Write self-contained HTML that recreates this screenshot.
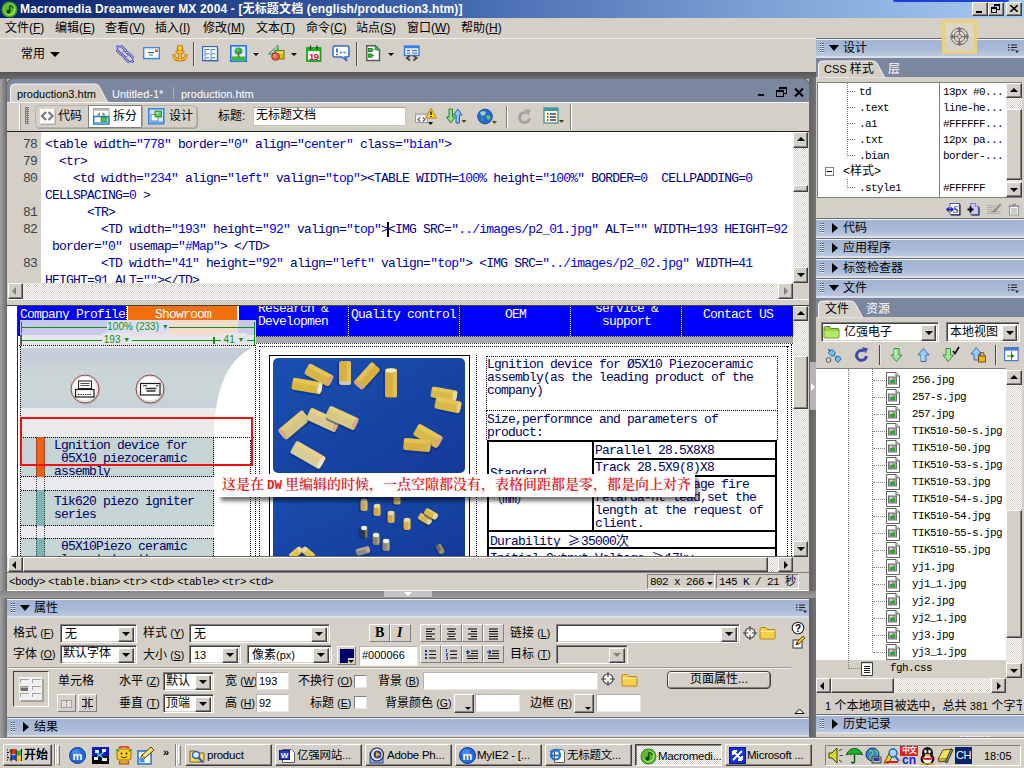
<!DOCTYPE html>
<html><head><meta charset="utf-8"><title>Macromedia Dreamweaver MX 2004</title>
<style>
*{box-sizing:border-box;margin:0;padding:0}
html,body{width:1024px;height:768px;overflow:hidden;background:#d4d0c8}
body{position:relative;font-family:"Liberation Sans","Noto Sans CJK SC",sans-serif;font-size:12px;color:#000}
.a{position:absolute}
.ui{font-family:"Liberation Sans","Noto Sans CJK SC",sans-serif;font-size:12px;line-height:14px;white-space:nowrap}
.mono{font-family:"Liberation Mono","Noto Sans CJK SC",monospace;white-space:pre}
.hdr{position:absolute;height:20px;border-top:1px solid #6e6e6e;background:linear-gradient(#eef1f7 0,#eef1f7 1px,#a3b4d4 1px,#a8b8d6 10px,#bcc8df 17px,#d9dee8 17px,#d9dee8 19px);font-size:12px;line-height:17px;white-space:nowrap}
.hdr .grip{position:absolute;left:4px;top:4px;width:5px;height:10px;background:repeating-linear-gradient(90deg,transparent 0 1px,#a8b8d6 1px 2px,transparent 2px 3px),repeating-linear-gradient(#4a5a80 0 1px,#eef1f7 1px 2px)}
.hdr .tri{position:absolute;left:13px;top:6px;width:0;height:0;border-left:5px solid transparent;border-right:5px solid transparent;border-top:6px solid #000}
.hdr .trir{position:absolute;left:16px;top:4px;width:0;height:0;border-top:5px solid transparent;border-bottom:5px solid transparent;border-left:6px solid #000}
.hdr .t{position:absolute;left:27px;top:1px}
.sunk{position:absolute;background:#fff;border:1px solid;border-color:#808080 #fff #fff #808080;box-shadow:inset 1px 1px 0 #404040,inset -1px -1px 0 #d4d0c8}
.btn{position:absolute;background:#d4d0c8;border:1px solid;border-color:#fff #404040 #404040 #fff;box-shadow:inset -1px -1px 0 #808080,inset 1px 1px 0 #d4d0c8}
.sb{position:absolute;background:#e9e7e3;background-image:repeating-conic-gradient(#fff 0 25%,#d4d0c8 0 50%);background-size:2px 2px}
.ln{font-size:13px;letter-spacing:-.8px;line-height:17px;color:#404040}
.cd{font-size:13px;letter-spacing:-.8px;line-height:17px;color:#000090}
.cd b{font-weight:normal;color:#0000f0}
.dv{font-size:13px;letter-spacing:-.8px;line-height:15px}
.sm{font-size:11px;letter-spacing:-.6px;line-height:14px}
.arr{position:absolute;width:0;height:0}
</style></head><body>
<div class="a" style="left:0;top:0;width:1024px;height:18px;background:linear-gradient(90deg,#0a246a 0,#3a5fa8 40%,#7fa2d6 75%,#a6caf0 100%)"></div>
<div class="a" style="left:893px;top:0;width:116px;height:2px;background:#1c3fd8;border-radius:0 0 3px 3px"></div>
<svg class="a" style="left:1px;top:1px" width="17" height="17" viewBox="0 0 17 17"><circle cx="8.5" cy="8.5" r="8" fill="#3c9a2c"/><circle cx="8.5" cy="8.5" r="6.3" fill="#9be04a"/><circle cx="8" cy="8" r="5" fill="#58b830"/><path d="M9.5 4.5v6.2a2 2 0 1 1-1.3-1.9V4.5z" fill="#0a3c10"/><path d="M9.5 4.5c1.5.3 2.5 1.2 2.8 2.6" stroke="#0a3c10" stroke-width="1.2" fill="none"/></svg>
<div class="a ui" id="ttl" style="left:20px;top:2px;color:#fff;font-weight:bold;font-size:12px;line-height:14px;letter-spacing:.15px">Macromedia Dreamweaver MX 2004 - [无标题文档 (english/production3.htm)]</div>
<div class="btn" style="left:972px;top:2px;width:16px;height:14px"><div class="a" style="left:3px;top:8px;width:6px;height:2px;background:#000"></div></div>
<div class="btn" style="left:988px;top:2px;width:16px;height:14px"><div class="a" style="left:5px;top:1px;width:6px;height:6px;border:1px solid #000;border-top-width:2px"></div><div class="a" style="left:2px;top:4px;width:6px;height:6px;border:1px solid #000;border-top-width:2px;background:#d4d0c8"></div></div>
<div class="btn" style="left:1006px;top:2px;width:16px;height:14px"><svg class="a" style="left:3px;top:2px" width="8" height="7" viewBox="0 0 8 7"><path d="M0 0l8 7M8 0L0 7" stroke="#000" stroke-width="1.6"/></svg></div>

<div class="a" style="left:0;top:18px;width:1024px;height:20px;background:#d4d0c8"></div>
<div class="a ui" style="left:5px;top:21px">文件(<u>F</u>)</div>
<div class="a ui" style="left:55px;top:21px">编辑(<u>E</u>)</div>
<div class="a ui" style="left:105px;top:21px">查看(<u>V</u>)</div>
<div class="a ui" style="left:155px;top:21px">插入(<u>I</u>)</div>
<div class="a ui" style="left:203px;top:21px">修改(<u>M</u>)</div>
<div class="a ui" style="left:256px;top:21px">文本(<u>T</u>)</div>
<div class="a ui" style="left:306px;top:21px">命令(<u>C</u>)</div>
<div class="a ui" style="left:356px;top:21px">站点(<u>S</u>)</div>
<div class="a ui" style="left:407px;top:21px">窗口(<u>W</u>)</div>
<div class="a ui" style="left:461px;top:21px">帮助(<u>H</u>)</div>

<div class="a" style="left:0;top:38px;width:816px;height:34px;background:#d4d0c8;border-top:1px solid #efede8"></div>
<div class="a ui" style="left:21px;top:47px">常用</div>
<div class="arr" style="left:50px;top:52px;border-left:5px solid transparent;border-right:5px solid transparent;border-top:5px solid #000"></div>
<!-- hyperlink -->
<svg class="a" style="left:116px;top:45px" width="18" height="18" viewBox="0 0 18 18"><g transform="rotate(45 9 9)"><rect x="-1.500" y="6" width="11" height="6" rx="3" fill="none" stroke="#3838b0" stroke-width="2.600"/><rect x="-1.500" y="6" width="11" height="6" rx="3" fill="none" stroke="#c0c4f8" stroke-width="1"/><rect x="8.500" y="6" width="11" height="6" rx="3" fill="none" stroke="#3838b0" stroke-width="2.600"/><rect x="8.500" y="6" width="11" height="6" rx="3" fill="none" stroke="#c0c4f8" stroke-width="1"/><rect x="6" y="7.800" width="6" height="2.400" fill="#e8e8f8" stroke="#3838b0" stroke-width=".7"/></g></svg>
<!-- email -->
<svg class="a" style="left:143px;top:47px" width="18" height="14" viewBox="0 0 18 14"><rect x="1" y="1.500" width="16" height="11.500" fill="#9ab8e0" opacity=".6"/><rect x=".7" y=".7" width="15.600" height="10.800" fill="#fff" stroke="#3a8ae8" stroke-width="1.400"/><path d="M1.500 2h14" stroke="#c8dcf8"/><rect x="5" y="5" width="6" height="1.200" fill="#555"/><rect x="6" y="7.500" width="4" height="1.200" fill="#888"/><rect x="12" y="2.500" width="3" height="2.500" fill="#f06020"/></svg>
<!-- anchor -->
<svg class="a" style="left:172px;top:45px" width="16" height="17" viewBox="0 0 16 17"><g fill="none" stroke="#b86800" stroke-width="3.200" stroke-linecap="round" stroke-linejoin="round"><circle cx="8" cy="3" r="1.600"/><path d="M8 5v9.500M5 7h6M2 10.500c.3 3 2.500 4.300 6 4.300s5.700-1.300 6-4.300"/></g><g fill="none" stroke="#ffc428" stroke-width="1.700" stroke-linecap="round" stroke-linejoin="round"><circle cx="8" cy="3" r="1.600"/><path d="M8 5v9.500M5 7h6M2 10.500c.3 3 2.500 4.300 6 4.300s5.700-1.300 6-4.300"/></g><circle cx="8" cy="3" r=".8" fill="#fff"/></svg>
<div class="a" style="left:193px;top:42px;width:2px;height:24px;border-left:1px solid #505050;border-right:1px solid #e8e6e0"></div>
<!-- table -->
<svg class="a" style="left:202px;top:46px" width="18" height="17" viewBox="0 0 18 17"><rect x="2" y="2" width="15" height="14" fill="#8898b8" opacity=".6"/><rect x=".6" y=".6" width="14.800" height="14" fill="#fff" stroke="#3a68b8" stroke-width="1.200"/><g fill="none" stroke="#4878c8" stroke-width="1"><path d="M3 7V3.500h4.500M9 7V3.500h4.500M3 10.800V7.800h4.500M9 10.800V7.800h4.500M3 14V11.800h4.500M9 14V11.800h4.500"/></g></svg>
<!-- image -->
<svg class="a" style="left:230px;top:45px" width="17" height="17" viewBox="0 0 17 17"><rect x=".8" y=".8" width="15.400" height="15.400" fill="#d8ecfc" stroke="#2a70e8" stroke-width="1.600"/><rect x="1.600" y="11.500" width="13.800" height="4" fill="#38b838"/><ellipse cx="8.500" cy="6" rx="4" ry="3.500" fill="#38a040"/><ellipse cx="7.500" cy="5" rx="2" ry="1.500" fill="#68c068"/><rect x="7.800" y="8.500" width="1.500" height="3.500" fill="#705030"/></svg>
<div class="arr" style="left:253px;top:53px;border-left:3px solid transparent;border-right:3px solid transparent;border-top:3px solid #000"></div>
<!-- media -->
<svg class="a" style="left:267px;top:44px" width="19" height="18" viewBox="0 0 19 18"><path d="M1.500 10L11 1.500V10z" fill="#78c8b8" stroke="#2a8070"/><path d="M3.500 9.500L10.500 3" stroke="#c8f0e8"/><rect x="8" y="6.500" width="9" height="8.500" fill="#c8c428" stroke="#787400"/><rect x="9" y="7.500" width="7" height="2" fill="#e8e468"/><circle cx="8.500" cy="12.500" r="3.800" fill="#f06838" stroke="#a02810"/><circle cx="7.500" cy="11.500" r="1.500" fill="#f8a080"/></svg>
<div class="arr" style="left:291px;top:53px;border-left:3px solid transparent;border-right:3px solid transparent;border-top:3px solid #000"></div>
<!-- date -->
<svg class="a" style="left:306px;top:45px" width="16" height="17" viewBox="0 0 16 17"><rect x="1" y="3" width="13.500" height="13" fill="#fff" stroke="#18a018" stroke-width="1.800"/><rect x="1" y="3" width="13.500" height="3.200" fill="#28b028"/><path d="M4.500 .5v4M11 .5v4" stroke="#103010" stroke-width="1.200"/><text x="7.800" y="14.600" font-size="9.500" font-weight="bold" font-family="Liberation Sans, sans-serif" fill="#d81030" text-anchor="middle" letter-spacing="-.5">19</text></svg>
<!-- comment -->
<svg class="a" style="left:332px;top:45px" width="18" height="17" viewBox="0 0 18 17"><path d="M3 1h12a2 2 0 0 1 2 2v7a2 2 0 0 1-2 2h-2l2 4-5-4H3a2 2 0 0 1-2-2V3a2 2 0 0 1 2-2z" fill="#fff" stroke="#3a6ac8" stroke-width="1.500"/><path d="M5 3.500v4M5 9v1.200" stroke="#3a6ac8" stroke-width="1.800"/><path d="M8 7.500h2M11.500 7.500h2" stroke="#3a6ac8" stroke-width="1.500"/></svg>
<div class="a" style="left:356px;top:42px;width:2px;height:24px;border-left:1px solid #505050;border-right:1px solid #e8e6e0"></div>
<!-- template -->
<svg class="a" style="left:366px;top:45px" width="15" height="17" viewBox="0 0 15 17"><path d="M.8.800h8.500l4.200 4.200v10.500H.8z" fill="#fff" stroke="#585858" stroke-width="1.400"/><path d="M9.300.8l4.200 4.200H9.300z" fill="#40c040" stroke="#208020" stroke-width=".8"/><rect x="2.500" y="3.500" width="3.500" height="3.200" fill="#38c038" stroke="#107010" stroke-width=".8"/><rect x="2.500" y="9" width="3.500" height="3.200" fill="#38c038" stroke="#107010" stroke-width=".8"/><path d="M6 5h2M6 10.500h2" stroke="#107010" stroke-width=".8"/></svg>
<div class="arr" style="left:388px;top:53px;border-left:3px solid transparent;border-right:3px solid transparent;border-top:3px solid #000"></div>
<!-- tag chooser -->
<svg class="a" style="left:403px;top:45px" width="18" height="17" viewBox="0 0 18 17"><rect x="1.500" y="1" width="14.500" height="9.500" fill="#e0ecfc" stroke="#3a80e8" stroke-width="1.400"/><rect x="1.500" y="1" width="14.500" height="2.200" fill="#3a80e8"/><path d="M4 5.500h3M9 5.500h5M4 8h3M9 8h5" stroke="#506890" stroke-width="1.100"/><path d="M7 10.500l-3 2.500 3 2.500M10.500 10.500l3 2.500-3 2.500" fill="none" stroke="#484848" stroke-width="2"/></svg>

<!-- dark strip + left strip -->
<div class="a" style="left:0;top:72px;width:816px;height:7px;background:linear-gradient(#565656,#6c6c6c)"></div>
<div class="a" style="left:0;top:79px;width:7px;height:660px;background:linear-gradient(90deg,#a2a2a2,#8a8a8a 45%,#6a6a6a)"></div>
<div class="a" style="left:809px;top:79px;width:7px;height:660px;background:linear-gradient(90deg,#606060,#747474)"></div>
<div class="a" style="left:0;top:591px;width:816px;height:7px;background:linear-gradient(#868686,#9a9a9a)"></div>
<div class="a" style="left:809px;top:362px;width:7px;height:48px;background:#b4b4b4"></div><div class="arr" style="left:811px;top:383px;border-top:4px solid transparent;border-bottom:4px solid transparent;border-left:4px solid #fff"></div>
<!-- document window -->
<div class="a" style="left:6px;top:78px;width:804px;height:513px;background:#6c6c6c;border-radius:8px 8px 0 0"></div>
<div class="a" style="left:7px;top:79px;width:802px;height:24px;background:#7b879f;border-radius:7px 7px 0 0"></div>
<!-- active tab -->
<svg class="a" style="left:10px;top:83px" width="100" height="20" viewBox="0 0 100 20"><path d="M.5 20V5a4 4 0 0 1 4-4h80c3 0 4 1 5.500 4l8 15z" fill="#d4d0c8" stroke="#f4f4f4" stroke-width="1"/></svg>
<div class="a ui" style="left:17px;top:87px;font-size:11px">production3.htm</div>
<div class="a ui" style="left:112px;top:87px;font-size:11px;color:#fff">Untitled-1*</div>
<div class="a" style="left:173px;top:87px;width:1px;height:12px;background:#a8b2c6"></div>
<div class="a ui" style="left:181px;top:87px;font-size:11px;color:#fff">production.htm</div>
<div class="a" style="left:758px;top:94px;width:6px;height:2px;background:#000"></div>
<div class="a" style="left:779px;top:87px;width:8px;height:7px;border:1px solid #000;border-top-width:2px"></div>
<div class="a" style="left:776px;top:90px;width:8px;height:7px;border:1px solid #000;border-top-width:2px;background:#7b879f"></div>
<svg class="a" style="left:794px;top:88px" width="10" height="9" viewBox="0 0 10 9"><path d="M1 .5l8 8M9 .5l-8 8" stroke="#000" stroke-width="2"/></svg>
<!-- doc toolbar -->
<div class="a" style="left:7px;top:102px;width:802px;height:30px;background:#d4d0c8;border-top:1px solid #f4f4f4;border-bottom:1px solid #202020"></div>
<div class="a" style="left:19px;top:104px;width:2px;height:26px;border-left:1px solid #fff;border-right:1px solid #a0a0a0"></div>
<div class="a" style="left:25px;top:107px;width:4px;height:17px;background:repeating-linear-gradient(#808080 0 1px,transparent 1px 2px),repeating-linear-gradient(90deg,#808080 0 1px,#d4d0c8 1px 2px)"></div>
<div class="a" style="left:35px;top:105px;width:162px;height:23px;border:1px solid #b8b4ac;border-radius:4px;background:#d4d0c8;box-shadow:1px 1px 0 #a8a49c"></div>
<div class="a" style="left:88px;top:105px;width:54px;height:23px;background:#fff;border:1px solid #808080"></div>
<div class="a" style="left:142px;top:107px;width:1px;height:19px;background:#a8a49c"></div>
<!-- code icon -->
<svg class="a" style="left:39px;top:108px" width="17" height="17" viewBox="0 0 17 17"><rect x="1.500" y="1.500" width="15" height="15" fill="#888"/><rect x=".5" y=".5" width="15" height="15" fill="#fafafa" stroke="#d8d8d8"/><path d="M7 4L3 8l4 4M9.500 4l4 4-4 4" fill="none" stroke="#787878" stroke-width="2.200"/></svg>
<div class="a ui" style="left:58px;top:109px">代码</div>
<svg class="a" style="left:93px;top:108px" width="17" height="17" viewBox="0 0 17 17"><rect x=".5" y=".5" width="15.500" height="15.500" fill="#fff" stroke="#a0a0a0"/><rect x="1" y="1" width="14.500" height="2" fill="#c0c0c0"/><path d="M7 4L3.500 7.500H7zM9.500 4L13 7.500H9.500z" fill="#808080"/><rect x=".8" y="8.500" width="15" height="7.500" fill="#fff" stroke="#2878d8" stroke-width="1.400"/><rect x="1.500" y="14" width="13.500" height="1.800" fill="#68a8e8"/><rect x="8" y="9.500" width="6" height="4" fill="#50c050" stroke="#208020" stroke-width=".7"/></svg>
<div class="a ui" style="left:113px;top:109px">拆分</div>
<svg class="a" style="left:148px;top:108px" width="17" height="17" viewBox="0 0 17 17"><rect x=".8" y=".8" width="15" height="15" fill="#d8e8fc" stroke="#2878d8" stroke-width="1.400"/><rect x="1.500" y="13.500" width="13.500" height="2" fill="#68a8e8"/><rect x="3" y="6.500" width="7" height="6.500" fill="#fff" stroke="#4888d8"/><rect x="7" y="3" width="6.500" height="6" fill="#58c858" stroke="#208020" stroke-width=".8"/><rect x="8" y="4" width="3" height="2" fill="#a0e8a0"/></svg>
<div class="a ui" style="left:169px;top:109px">设计</div>
<div class="a ui" style="left:218px;top:109px">标题:</div>
<div class="a" style="left:253px;top:107px;width:153px;height:19px;background:#fff;border:1px solid #c8c4bc;border-top-color:#a8a49c"></div>
<div class="a ui" style="left:256px;top:108px">无标题文档</div>
<!-- doc toolbar icons -->
<svg class="a" style="left:414px;top:107px" width="24" height="20" viewBox="0 0 24 20"><rect x="1.500" y="6.500" width="12" height="9" fill="#f4f4f4" stroke="#9a9a9a"/><rect x="1.500" y="6.500" width="12" height="2" fill="#c0c0c0"/><path d="M6 10.500L4 12.500l2 2M9 10.500l2 2-2 2" fill="none" stroke="#606060" stroke-width="1.200"/><path d="M17 1.500l5.500 9.500h-11z" fill="#ffd020" stroke="#a87800" stroke-width=".8"/><path d="M17 4.500v3.500M17 9v1" stroke="#000" stroke-width="1.300"/><path d="M14 15h5l-2.500 3z" fill="#000"/></svg>
<svg class="a" style="left:446px;top:108px" width="24" height="18" viewBox="0 0 24 18"><path d="M3 1h3.500v8H9L4.800 15 .5 9H3z" fill="#90e090" stroke="#207020" stroke-width=".9"/><path d="M13.500 15H10V7H7.500l4.300-6L16 7h-2.500z" fill="#90c4f0" stroke="#2050a0" stroke-width=".9"/><path d="M15.500 12h5l-2.500 3z" fill="#505000"/></svg>
<svg class="a" style="left:476px;top:108px" width="24" height="20" viewBox="0 0 24 20"><circle cx="9" cy="8.500" r="7.300" fill="#2868d0" stroke="#1a4898"/><path d="M4.500 4.500c2-1.500 4-1 4.500.5s-1 2.500-2.500 3.500 0 3.500 1 4.500M11 7c2 0 3.500 1 3.500 2.500s-2 3-3 2-1.500-3-.5-4.500z" fill="#58c858"/><ellipse cx="7" cy="5" rx="3" ry="2" fill="#c8e0ff" opacity=".6"/><path d="M16 13h5l-2.500 3z" fill="#505000"/></svg>
<div class="a" style="left:506px;top:106px;width:2px;height:22px;border-left:1px solid #808080;border-right:1px solid #fff"></div>
<svg class="a" style="left:517px;top:109px" width="16" height="16" viewBox="0 0 16 16"><path d="M12.500 9a5 5 0 1 1-3-5" fill="none" stroke="#a4a4a4" stroke-width="3"/><path d="M7.500 0l6.500 1-2.500 6z" fill="#a4a4a4"/></svg>
<svg class="a" style="left:543px;top:107px" width="24" height="20" viewBox="0 0 24 20"><rect x="1" y="1" width="14" height="15" fill="#fffad0" stroke="#3a8a98" stroke-width="1.200"/><rect x="1" y="1" width="14" height="3" fill="#3a9aa8"/><path d="M4 7h1.500M7 7h6M4 10h1.500M7 10h6M4 13h1.500M7 13h6" stroke="#304080" stroke-width="1.400"/><path d="M16 13h5l-2.500 3z" fill="#404000"/></svg>
<div class="a" style="left:570px;top:104px;width:2px;height:26px;border-left:1px solid #808080;border-right:1px solid #fff"></div>

<div class="a" style="left:7px;top:132px;width:802px;height:151px;background:#fff;overflow:hidden">

<div class="a" style="left:0;top:0;width:34px;height:152px;background:#d4d0c8"></div>
<div class="a mono ln" style="left:0;top:4px;width:30px;text-align:right">78</div>
<div class="a mono cd" style="left:38px;top:4px">&lt;table width=<b>"778"</b> border=<b>"0"</b> align=<b>"center"</b> class=<b>"bian"</b>&gt;</div>
<div class="a mono ln" style="left:0;top:21px;width:30px;text-align:right">79</div>
<div class="a mono cd" style="left:38px;top:21px">  &lt;tr&gt;</div>
<div class="a mono ln" style="left:0;top:38px;width:30px;text-align:right">80</div>
<div class="a mono cd" style="left:38px;top:38px">    &lt;td width=<b>"234"</b> align=<b>"left"</b> valign=<b>"top"</b>&gt;&lt;TABLE WIDTH=<b>100%</b> height=<b>"100%"</b> BORDER=<b>0</b>  CELLPADDING=<b>0</b></div>
<div class="a mono cd" style="left:38px;top:55px">CELLSPACING=<b>0</b> &gt;</div>
<div class="a mono ln" style="left:0;top:72px;width:30px;text-align:right">81</div>
<div class="a mono cd" style="left:38px;top:72px">      &lt;TR&gt;</div>
<div class="a mono ln" style="left:0;top:89px;width:30px;text-align:right">82</div>
<div class="a mono cd" style="left:38px;top:89px">        &lt;TD width=<b>"193"</b> height=<b>"92"</b> valign=<b>"top"</b>&gt;&lt;IMG SRC=<b>"../images/p2_01.jpg"</b> ALT=<b>""</b> WIDTH=<b>193</b> HEIGHT=<b>92</b></div>
<div class="a mono cd" style="left:38px;top:106px"> border=<b>"0"</b> usemap=<b>"#Map"</b>&gt; &lt;/TD&gt;</div>
<div class="a mono ln" style="left:0;top:123px;width:30px;text-align:right">83</div>
<div class="a mono cd" style="left:38px;top:123px">        &lt;TD width=<b>"41"</b> height=<b>"92"</b> align=<b>"left"</b> valign=<b>"top"</b>&gt; &lt;IMG SRC=<b>"../images/p2_02.jpg"</b> WIDTH=<b>41</b></div>
<div class="a mono cd" style="left:38px;top:140px">HEIGHT=<b>91</b> ALT=<b>""</b>&gt;&lt;/TD&gt;</div>
<div class="a" style="left:380px;top:90px;width:2px;height:15px;background:#000"></div>
</div>
<div class="sb" style="left:793px;top:132px;width:15px;height:151px"></div>
<div class="btn" style="left:793px;top:132px;width:15px;height:16px"><div class="arr" style="left:3px;top:4px;border-left:4px solid transparent;border-right:4px solid transparent;border-bottom:4px solid #000"></div></div>
<div class="btn" style="left:793px;top:185px;width:15px;height:7px"></div>
<div class="btn" style="left:793px;top:267px;width:15px;height:16px"><div class="arr" style="left:3px;top:5px;border-left:4px solid transparent;border-right:4px solid transparent;border-top:4px solid #000"></div></div>
<div class="sb" style="left:8px;top:283px;width:786px;height:16px"></div>
<div class="a" style="left:7px;top:283px;width:1px;height:16px;background:#d4d0c8"></div>
<div class="btn" style="left:8px;top:283px;width:15px;height:16px"><div class="arr" style="left:3px;top:3px;border-top:4px solid transparent;border-bottom:4px solid transparent;border-right:4px solid #808080"></div></div>
<div class="btn" style="left:778px;top:283px;width:15px;height:16px"><div class="arr" style="left:5px;top:3px;border-top:4px solid transparent;border-bottom:4px solid transparent;border-left:4px solid #808080"></div></div>
<div class="a" style="left:793px;top:283px;width:15px;height:16px;background:#d4d0c8"></div>
<div class="a" style="left:7px;top:299px;width:802px;height:7px;z-index:3;background:#d4d0c8;border-top:1px solid #fff;border-bottom:1px solid #404040"></div>
<div class="a" style="left:808px;top:132px;width:1px;height:440px;background:#d4d0c8;z-index:2"></div>

<div class="a" style="left:7px;top:306px;width:4px;height:251px;background:#fff"></div>
<div class="a" id="dv" style="left:10px;top:305px;width:783px;height:251px;background:#fff;overflow:hidden">
<div class="a" style="left:7px;top:0px;width:1px;height:251px;background:#303030"></div>
<div class="a" style="left:8px;top:0px;width:109px;height:31px;background:#0000ff"></div>
<div class="a" style="left:118px;top:0px;width:110px;height:31px;background:#f07010"></div>
<div class="a" style="left:229px;top:0px;width:554px;height:31px;background:#0000ff"></div>
<div class="a" style="left:116px;top:0px;width:2px;height:31px;background:#fff;border-left:1px dotted #000"></div>
<div class="a" style="left:227px;top:0px;width:2px;height:31px;background:#fff"></div>
<div class="a mono dv" style="left:10px;top:2px;color:#fff">Company Profile</div>
<div class="a mono dv" style="left:118px;top:2px;color:#fff;width:110px;text-align:center">Showroom</div>
<div class="a mono dv" style="left:248px;top:-3px;color:#fff;line-height:13px">Research &amp;
Developmen</div>
<div class="a mono dv" style="left:341px;top:2px;color:#fff">Quality control</div>
<div class="a mono dv" style="left:451px;top:2px;color:#fff;width:109px;text-align:center">OEM</div>
<div class="a mono dv" style="left:561px;top:-3px;color:#fff;width:111px;text-align:center;line-height:13px">service &amp;
support</div>
<div class="a mono dv" style="left:673px;top:2px;color:#fff;width:110px;text-align:center">Contact US</div>
<div class="a" style="left:338px;top:0px;width:2px;height:31px;border-left:1px dotted #fff;border-right:1px dotted #000"></div>
<div class="a" style="left:449px;top:0px;width:2px;height:31px;border-left:1px dotted #fff;border-right:1px dotted #000"></div>
<div class="a" style="left:560px;top:0px;width:2px;height:31px;border-left:1px dotted #fff;border-right:1px dotted #000"></div>
<div class="a" style="left:671px;top:0px;width:2px;height:31px;border-left:1px dotted #fff;border-right:1px dotted #000"></div>
<div class="a" style="left:229px;top:31px;width:554px;height:7px;background:#a8a8ae;border-top:1px dotted #303030"></div>
<div class="a" style="left:246px;top:38px;width:537px;height:1px;border-top:1px dotted #404040"></div>
<div class="a" style="left:10px;top:15px;width:236px;height:15px;background:#c9c9ec"></div><div class="a" style="left:118px;top:15px;width:110px;height:15px;background:#f3dccb"></div>
<div class="a" style="left:10px;top:30px;width:236px;height:10px;background:#e6e6ea"></div>
<div class="a" style="left:10px;top:30px;width:1px;height:10px;background:#606060"></div>
<div class="a" style="left:11px;top:22px;width:234px;height:1px;background:#109010"></div>
<div class="a" style="left:11px;top:17px;width:1px;height:11px;background:#109010"></div>
<div class="a" style="left:244px;top:17px;width:1px;height:24px;background:#109010"></div>
<div class="a" style="left:11px;top:35px;width:234px;height:1px;background:#109010"></div>
<div class="a" style="left:11px;top:29px;width:1px;height:12px;background:#109010"></div>
<div class="a" style="left:203px;top:32px;width:2px;height:7px;background:#109010"></div>
<div class="a ui" style="left:97px;top:15px;width:62px;height:14px;background:#dcdef2;color:#109010;font-size:10px;text-align:center">100% (233) <span style="font-size:7px;vertical-align:1px">▼</span></div>
<div class="a ui" style="left:92px;top:28px;width:30px;height:13px;background:#e6e6ea;color:#109010;font-size:10px;text-align:center">193 <span style="font-size:7px;vertical-align:1px">▼</span></div>
<div class="a ui" style="left:211px;top:28px;width:26px;height:13px;background:#e6e6ea;color:#109010;font-size:10px;text-align:center">41 <span style="font-size:7px;vertical-align:1px">▼</span></div>
<div class="a" style="left:9px;top:40px;width:237px;height:1px;border-top:1px dotted #000"></div>
<div class="a" style="left:10px;top:43px;width:236px;height:60px;background:linear-gradient(#c5cdd9 0,#c5cdd9 18%,#c9d5d7 38%,#c9d5d7 85%,#c6cfdb 100%)"></div>
<div class="a" style="left:10px;top:41px;width:236px;height:2px;background:#ebebeb"></div><div class="a" style="left:10px;top:103px;width:236px;height:29px;background:#ebebeb"></div>
<svg class="a" style="left:195px;top:41px" width="51" height="130" viewBox="0 0 51 130"><path d="M51 0v130H9V91C9 40 25 10 51 0z" fill="#fff"/></svg>
<div class="a" style="left:10px;top:41px;width:1px;height:210px;border-left:1px dotted #000"></div>
<svg class="a" style="left:59px;top:68px" width="32" height="32" viewBox="0 0 32 32"><circle cx="17" cy="17.500" r="14" fill="#a8a8a8" opacity=".55"/><circle cx="16" cy="16" r="14" fill="#e4e4e4" stroke="#8c3030" stroke-width=".9"/><circle cx="15.500" cy="15.500" r="11.500" fill="#fff"/><rect x="9.500" y="8" width="13" height="7.500" fill="#fff" stroke="#282828" stroke-width="1.100"/><path d="M11.500 10.500h9M11.500 12.500h9" stroke="#484848" stroke-width="1"/><rect x="6.500" y="16.500" width="18.500" height="7.500" fill="#fff" stroke="#181818" stroke-width="1.200"/><path d="M9 21.500h13.500" stroke="#303030" stroke-width="1.200" stroke-dasharray="1.500 .8"/></svg>
<svg class="a" style="left:124px;top:68px" width="32" height="32" viewBox="0 0 32 32"><circle cx="17" cy="17.500" r="14" fill="#a8a8a8" opacity=".55"/><circle cx="16" cy="16" r="14" fill="#e4e4e4" stroke="#8c3030" stroke-width=".9"/><circle cx="15.500" cy="15.500" r="11.500" fill="#fff"/><rect x="6.500" y="10.500" width="19.500" height="11.500" fill="#fff" stroke="#181818" stroke-width="1.200"/><path d="M9 12.800h4M22 12.800h2.500" stroke="#202020" stroke-width="1.100"/><path d="M11.500 15.500h11M12.500 18h9" stroke="#303030" stroke-width="1.600"/></svg>
<div class="a" style="left:11px;top:132px;width:235px;height:1px;border-top:1px dotted #000"></div>
<div class="a" style="left:11px;top:132px;width:193px;height:40px;background:#c5d4d4;border-top:1px dotted #000;border-bottom:1px dotted #000;border-right:1px dotted #000"></div>
<div class="a" style="left:26px;top:132px;width:9px;height:40px;background:#f06010;border-left:1px dotted #404040;border-right:1px dotted #404040"></div>
<div class="a mono dv" style="left:44px;top:134px;color:#000066;line-height:13px">Lgnition device for
 θ5X10 piezoceramic
assembly</div>
<div class="a" style="left:11px;top:172px;width:193px;height:13px;background:#ece8f0"></div>
<div class="a" style="left:11px;top:185px;width:193px;height:36px;background:#c5d4d4;border-top:1px dotted #000;border-bottom:1px dotted #000;border-right:1px dotted #000"></div>
<div class="a" style="left:26px;top:185px;width:9px;height:36px;background:#7db5b5;border-left:1px dotted #404040;border-right:1px dotted #404040"></div>
<div class="a mono dv" style="left:44px;top:190px;color:#000066;line-height:13px">Tik620 piezo igniter
series</div>
<div class="a" style="left:11px;top:221px;width:193px;height:12px;background:#ece8f0"></div>
<div class="a" style="left:11px;top:233px;width:193px;height:40px;background:#c5d4d4;border-top:1px dotted #000;border-bottom:1px dotted #000;border-right:1px dotted #000"></div>
<div class="a" style="left:26px;top:233px;width:9px;height:40px;background:#7db5b5;border-left:1px dotted #404040;border-right:1px dotted #404040"></div>
<div class="a mono dv" style="left:44px;top:235px;color:#000066;line-height:13px"> θ5X10Piezo ceramic
element (another</div>
<div class="a" style="left:26px;top:172px;width:9px;height:13px;border-left:1px dotted #404040;border-right:1px dotted #404040"></div>
<div class="a" style="left:26px;top:221px;width:9px;height:12px;border-left:1px dotted #404040;border-right:1px dotted #404040"></div>
<div class="a" style="left:240px;top:135px;width:1px;height:116px;border-left:1px dotted #000"></div>
<div class="a" style="left:245px;top:40px;width:1px;height:211px;border-left:1px dotted #000"></div>
<div class="a" style="left:249px;top:45px;width:1px;height:206px;border-left:1px dotted #000"></div>
<div class="a" style="left:249px;top:41px;width:530px;height:1px;border-top:1px dotted #000"></div>
<div class="a" style="left:466px;top:50px;width:1px;height:201px;border-left:1px dotted #000"></div>
<div class="a" style="left:777px;top:41px;width:1px;height:210px;border-left:1px dotted #000"></div><div class="a" style="left:781px;top:39px;width:1px;height:212px;border-left:1px dotted #000"></div>
<div class="a" style="left:10px;top:112px;width:233px;height:49px;border:2px solid #f01010"></div>
<div class="a" style="left:259px;top:50px;width:201px;height:201px;border:1px solid #000;border-bottom:0"></div>
<svg class="a" style="left:263px;top:53px" width="192" height="198" viewBox="273 358 192 198"><defs><linearGradient id="bg1" x1="0" y1="0" x2="1" y2="1"><stop offset="0" stop-color="#1a50b0"/><stop offset="1" stop-color="#143a9a"/></linearGradient></defs><rect x="273" y="358" width="192" height="115" rx="5" fill="url(#bg1)"/><path d="M273 556V483a5 5 0 0 1 5-5h182a5 5 0 0 1 5 5v73z" fill="url(#bg1)"/><g transform="translate(319 375) rotate(28)"><rect x="-13.0" y="-4.0" width="28" height="12" rx="3" fill="#0c2c70" opacity=".5"/><rect x="-14.0" y="-6.0" width="28" height="12" rx="2.500" fill="#d9b646"/><rect x="-14.0" y="-6.0" width="28" height="4.199999999999999" rx="2" fill="#f4dc78" opacity=".4"/><ellipse cx="12.0" cy="0" rx="2.200" ry="5.5" fill="#d8a080"/></g><g transform="translate(307 386) rotate(10)"><rect x="-14.0" y="-4.0" width="30" height="12" rx="3" fill="#0c2c70" opacity=".5"/><rect x="-15.0" y="-6.0" width="30" height="12" rx="2.500" fill="#dab840"/><rect x="-15.0" y="-6.0" width="30" height="4.199999999999999" rx="2" fill="#f4dc78" opacity=".4"/><ellipse cx="13.0" cy="0" rx="2.200" ry="5.5" fill="#e8e8d8"/></g><g transform="translate(345 373) rotate(90)"><rect x="-11.0" y="-4.0" width="24" height="12" rx="3" fill="#0c2c70" opacity=".5"/><rect x="-12.0" y="-6.0" width="24" height="12" rx="2.500" fill="#d8b040"/><rect x="-12.0" y="-6.0" width="24" height="4.199999999999999" rx="2" fill="#f4dc78" opacity=".4"/><ellipse cx="10.0" cy="0" rx="2.200" ry="5.5" fill="#c8c8c8"/></g><g transform="translate(367 376) rotate(-48)"><rect x="-13.0" y="-4.0" width="28" height="12" rx="3" fill="#0c2c70" opacity=".5"/><rect x="-14.0" y="-6.0" width="28" height="12" rx="2.500" fill="#d8b040"/><rect x="-14.0" y="-6.0" width="28" height="4.199999999999999" rx="2" fill="#f4dc78" opacity=".4"/><ellipse cx="-12.0" cy="0" rx="2.200" ry="5.5" fill="#d8a080"/></g><g transform="translate(391 383) rotate(90)"><rect x="-13.5" y="-4.0" width="29" height="12" rx="3" fill="#0c2c70" opacity=".5"/><rect x="-14.5" y="-6.0" width="29" height="12" rx="2.500" fill="#d8b040"/><rect x="-14.5" y="-6.0" width="29" height="4.199999999999999" rx="2" fill="#f4dc78" opacity=".4"/><ellipse cx="-12.5" cy="0" rx="2.200" ry="5.5" fill="#f4ecc0"/></g><g transform="translate(444 394) rotate(10)"><rect x="-12.0" y="-3.5" width="26" height="11" rx="3" fill="#0c2c70" opacity=".5"/><rect x="-13.0" y="-5.5" width="26" height="11" rx="2.500" fill="#d8b848"/><rect x="-13.0" y="-5.5" width="26" height="3.8499999999999996" rx="2" fill="#f4dc78" opacity=".4"/><ellipse cx="11.0" cy="0" rx="2.200" ry="5.0" fill="#e8d8a8"/></g><g transform="translate(448 405) rotate(12)"><rect x="-12.0" y="-4.0" width="26" height="12" rx="3" fill="#0c2c70" opacity=".5"/><rect x="-13.0" y="-6.0" width="26" height="12" rx="2.500" fill="#d8b848"/><rect x="-13.0" y="-6.0" width="26" height="4.199999999999999" rx="2" fill="#f4dc78" opacity=".4"/><ellipse cx="11.0" cy="0" rx="2.200" ry="5.5" fill="#e8c880"/></g><g transform="translate(294 425) rotate(-40)"><rect x="-15.0" y="-4.5" width="32" height="13" rx="3" fill="#0c2c70" opacity=".5"/><rect x="-16.0" y="-6.5" width="32" height="13" rx="2.500" fill="#d4c488"/><rect x="-16.0" y="-6.5" width="32" height="4.55" rx="2" fill="#f4dc78" opacity=".4"/><ellipse cx="-14.0" cy="0" rx="2.200" ry="6.0" fill="#d8a888"/></g><g transform="translate(323 420) rotate(25)"><rect x="-15.0" y="-4.5" width="32" height="13" rx="3" fill="#0c2c70" opacity=".5"/><rect x="-16.0" y="-6.5" width="32" height="13" rx="2.500" fill="#d8c890"/><rect x="-16.0" y="-6.5" width="32" height="4.55" rx="2" fill="#f4dc78" opacity=".4"/><ellipse cx="14.0" cy="0" rx="2.200" ry="6.0" fill="#d8a888"/></g><g transform="translate(342 418) rotate(25)"><rect x="-15.0" y="-4.5" width="32" height="13" rx="3" fill="#0c2c70" opacity=".5"/><rect x="-16.0" y="-6.5" width="32" height="13" rx="2.500" fill="#d8c888"/><rect x="-16.0" y="-6.5" width="32" height="4.55" rx="2" fill="#f4dc78" opacity=".4"/><ellipse cx="14.0" cy="0" rx="2.200" ry="6.0" fill="#d8a888"/></g><g transform="translate(308 455) rotate(30)"><rect x="-16.0" y="-5.0" width="34" height="14" rx="3" fill="#0c2c70" opacity=".5"/><rect x="-17.0" y="-7.0" width="34" height="14" rx="2.500" fill="#d8cc98"/><rect x="-17.0" y="-7.0" width="34" height="4.8999999999999995" rx="2" fill="#f4dc78" opacity=".4"/><ellipse cx="15.0" cy="0" rx="2.200" ry="6.5" fill="#ece4c0"/></g><g transform="translate(428 436) rotate(30)"><rect x="-13.0" y="-4.5" width="28" height="13" rx="3" fill="#0c2c70" opacity=".5"/><rect x="-14.0" y="-6.5" width="28" height="13" rx="2.500" fill="#d8b848"/><rect x="-14.0" y="-6.5" width="28" height="4.55" rx="2" fill="#f4dc78" opacity=".4"/><ellipse cx="12.0" cy="0" rx="2.200" ry="6.0" fill="#d8a888"/></g><g transform="translate(417 445) rotate(5)"><rect x="-12.5" y="-4.0" width="27" height="12" rx="3" fill="#0c2c70" opacity=".5"/><rect x="-13.5" y="-6.0" width="27" height="12" rx="2.500" fill="#d8b040"/><rect x="-13.5" y="-6.0" width="27" height="4.199999999999999" rx="2" fill="#f4dc78" opacity=".4"/><ellipse cx="11.5" cy="0" rx="2.200" ry="5.5" fill="#d8b868"/></g><g transform="translate(364 505) rotate(90)"><rect x="-5.0" y="-1.5" width="12" height="7" rx="3" fill="#0c2c70" opacity=".5"/><rect x="-6.0" y="-3.5" width="12" height="7" rx="2.500" fill="#d0a848"/><rect x="-6.0" y="-3.5" width="12" height="2.4499999999999997" rx="2" fill="#f4dc78" opacity=".4"/><ellipse cx="-4.0" cy="0" rx="2.200" ry="3.0" fill="#e8d8a8"/></g><g transform="translate(377 510) rotate(90)"><rect x="-5.0" y="-1.5" width="12" height="7" rx="3" fill="#0c2c70" opacity=".5"/><rect x="-6.0" y="-3.5" width="12" height="7" rx="2.500" fill="#d0a848"/><rect x="-6.0" y="-3.5" width="12" height="2.4499999999999997" rx="2" fill="#f4dc78" opacity=".4"/><ellipse cx="-4.0" cy="0" rx="2.200" ry="3.0" fill="#e8d8a8"/></g><g transform="translate(391 517) rotate(90)"><rect x="-5.0" y="-1.5" width="12" height="7" rx="3" fill="#0c2c70" opacity=".5"/><rect x="-6.0" y="-3.5" width="12" height="7" rx="2.500" fill="#d0a848"/><rect x="-6.0" y="-3.5" width="12" height="2.4499999999999997" rx="2" fill="#f4dc78" opacity=".4"/><ellipse cx="-4.0" cy="0" rx="2.200" ry="3.0" fill="#e8d8a8"/></g><g transform="translate(407 524) rotate(90)"><rect x="-5.0" y="-1.5" width="12" height="7" rx="3" fill="#0c2c70" opacity=".5"/><rect x="-6.0" y="-3.5" width="12" height="7" rx="2.500" fill="#d8b040"/><rect x="-6.0" y="-3.5" width="12" height="2.4499999999999997" rx="2" fill="#f4dc78" opacity=".4"/><ellipse cx="-4.0" cy="0" rx="2.200" ry="3.0" fill="#e8d8a8"/></g><g transform="translate(397 500) rotate(90)"><rect x="-3.5" y="-1.5" width="9" height="7" rx="3" fill="#0c2c70" opacity=".5"/><rect x="-4.5" y="-3.5" width="9" height="7" rx="2.500" fill="#d0a848"/><rect x="-4.5" y="-3.5" width="9" height="2.4499999999999997" rx="2" fill="#f4dc78" opacity=".4"/><ellipse cx="-2.5" cy="0" rx="2.200" ry="3.0" fill="#e8d8a8"/></g><g transform="translate(425 519) rotate(30)"><rect x="-6.0" y="-1.5" width="14" height="7" rx="3" fill="#0c2c70" opacity=".5"/><rect x="-7.0" y="-3.5" width="14" height="7" rx="2.500" fill="#d8b848"/><rect x="-7.0" y="-3.5" width="14" height="2.4499999999999997" rx="2" fill="#f4dc78" opacity=".4"/><ellipse cx="5.0" cy="0" rx="2.200" ry="3.0" fill="#e8d8a8"/></g><g transform="translate(431 514) rotate(30)"><rect x="-6.0" y="-1.5" width="14" height="7" rx="3" fill="#0c2c70" opacity=".5"/><rect x="-7.0" y="-3.5" width="14" height="7" rx="2.500" fill="#d8b848"/><rect x="-7.0" y="-3.5" width="14" height="2.4499999999999997" rx="2" fill="#f4dc78" opacity=".4"/><ellipse cx="5.0" cy="0" rx="2.200" ry="3.0" fill="#e8d8a8"/></g><g transform="translate(364 532) rotate(90)"><rect x="-5.0" y="-1.5" width="12" height="7" rx="3" fill="#0c2c70" opacity=".5"/><rect x="-6.0" y="-3.5" width="12" height="7" rx="2.500" fill="#303840"/><rect x="-6.0" y="-3.5" width="12" height="2.4499999999999997" rx="2" fill="#f4dc78" opacity=".4"/><ellipse cx="-4.0" cy="0" rx="2.200" ry="3.0" fill="#f0f0e8"/></g><g transform="translate(376 539) rotate(90)"><rect x="-5.0" y="-1.5" width="12" height="7" rx="3" fill="#0c2c70" opacity=".5"/><rect x="-6.0" y="-3.5" width="12" height="7" rx="2.500" fill="#888070"/><rect x="-6.0" y="-3.5" width="12" height="2.4499999999999997" rx="2" fill="#f4dc78" opacity=".4"/><ellipse cx="-4.0" cy="0" rx="2.200" ry="3.0" fill="#f0f0e8"/></g><g transform="translate(386 545) rotate(90)"><rect x="-5.0" y="-1.5" width="12" height="7" rx="3" fill="#0c2c70" opacity=".5"/><rect x="-6.0" y="-3.5" width="12" height="7" rx="2.500" fill="#908878"/><rect x="-6.0" y="-3.5" width="12" height="2.4499999999999997" rx="2" fill="#f4dc78" opacity=".4"/><ellipse cx="-4.0" cy="0" rx="2.200" ry="3.0" fill="#f0f0e8"/></g><g transform="translate(363 551) rotate(-15)"><rect x="-6.0" y="-1.5" width="14" height="7" rx="3" fill="#0c2c70" opacity=".5"/><rect x="-7.0" y="-3.5" width="14" height="7" rx="2.500" fill="#908880"/><rect x="-7.0" y="-3.5" width="14" height="2.4499999999999997" rx="2" fill="#f4dc78" opacity=".4"/><ellipse cx="5.0" cy="0" rx="2.200" ry="3.0" fill="#c0a890"/></g><g transform="translate(440 549) rotate(60)"><rect x="-4.0" y="-1.0" width="10" height="6" rx="3" fill="#0c2c70" opacity=".5"/><rect x="-5.0" y="-3.0" width="10" height="6" rx="2.500" fill="#706850"/><rect x="-5.0" y="-3.0" width="10" height="2.0999999999999996" rx="2" fill="#f4dc78" opacity=".4"/><ellipse cx="3.0" cy="0" rx="2.200" ry="2.5" fill="#a09070"/></g><g transform="translate(296 553) rotate(-40)"><rect x="-6.0" y="-1.5" width="14" height="7" rx="3" fill="#0c2c70" opacity=".5"/><rect x="-7.0" y="-3.5" width="14" height="7" rx="2.500" fill="#e0c048"/><rect x="-7.0" y="-3.5" width="14" height="2.4499999999999997" rx="2" fill="#f4dc78" opacity=".4"/><ellipse cx="5.0" cy="0" rx="2.200" ry="3.0" fill="#e8d8a8"/></g><g transform="translate(308 553) rotate(40)"><rect x="-6.0" y="-1.5" width="14" height="7" rx="3" fill="#0c2c70" opacity=".5"/><rect x="-7.0" y="-3.5" width="14" height="7" rx="2.500" fill="#e0c048"/><rect x="-7.0" y="-3.5" width="14" height="2.4499999999999997" rx="2" fill="#f4dc78" opacity=".4"/><ellipse cx="-5.0" cy="0" rx="2.200" ry="3.0" fill="#e8d8a8"/></g></svg>
<div class="a" style="left:476px;top:51px;width:292px;height:55px;border:1px dotted #000"></div>
<div class="a mono dv" style="left:477px;top:53px;color:#000066;line-height:13px">Lgnition device for Ø5X10 Piezoceramic
assembly(as the leading product of the
company)</div>
<div class="a" style="left:476px;top:105px;width:292px;height:30px;border-left:1px dotted #000;border-right:1px dotted #000"></div>
<div class="a mono dv" style="left:477px;top:108px;color:#000066;line-height:13px">Size,performnce and parameters of
product:</div>
<div class="a" style="left:477px;top:135px;width:290px;height:120px;border:2px solid #000"></div>
<div class="a" style="left:582px;top:136px;width:2px;height:90px;background:#000"></div>
<div class="a" style="left:582px;top:153px;width:184px;height:2px;background:#000"></div>
<div class="a" style="left:582px;top:170px;width:184px;height:2px;background:#000"></div>
<div class="a" style="left:478px;top:225px;width:288px;height:2px;background:#000"></div>
<div class="a" style="left:478px;top:242px;width:288px;height:2px;background:#000"></div>
<div class="a mono dv" style="left:480px;top:162px;color:#000066;line-height:13px">Standard
size
（mm）</div>
<div class="a mono dv" style="left:585px;top:138px;color:#000066">Parallel 28.5X8X8</div>
<div class="a mono dv" style="left:585px;top:155px;color:#000066">Track 28.5X9(8)X8</div>
<div class="a mono dv" style="left:585px;top:173px;color:#000066;line-height:13px">Lead:High-voltage fire
retarda-nt lead,set the
length at the request of
client.</div>
<div class="a mono dv" style="left:480px;top:227px;color:#000066">Durability <span style="font-family:'Noto Sans CJK SC',sans-serif;letter-spacing:0;display:inline-block;width:14px;text-align:center">≥</span>35000次</div>
<div class="a mono dv" style="left:480px;top:244px;color:#000066">Initial Output Voltage <span style="font-family:'Noto Sans CJK SC',sans-serif;letter-spacing:0;display:inline-block;width:14px;text-align:center">≥</span>17kv</div>
<div class="a" style="left:208px;top:169px;width:477px;height:23px;background:#fff;box-shadow:3px 4px 4px rgba(0,0,0,.55)"></div>
<div class="a" style="left:212px;top:170px;font-family:'Liberation Serif','Noto Serif CJK SC',serif;font-weight:600;font-size:14px;line-height:20px;color:#e81c1c;white-space:nowrap" id="tip">这是在<span style="font-family:'Liberation Mono',monospace;font-size:12.5px;word-spacing:-4.5px"> DW </span>里编辑的时候，一点空隙都没有，表格间距都是零，都是向上对齐</div>
</div>
<div class="sb" style="left:793px;top:306px;width:15px;height:251px"></div>
<div class="btn" style="left:793px;top:306px;width:15px;height:15px"><div class="arr" style="left:3px;top:4px;border-left:4px solid transparent;border-right:4px solid transparent;border-bottom:4px solid #000"></div></div>
<div class="btn" style="left:793px;top:356px;width:15px;height:53px"></div>
<div class="btn" style="left:793px;top:541px;width:15px;height:16px"><div class="arr" style="left:3px;top:5px;border-left:4px solid transparent;border-right:4px solid transparent;border-top:4px solid #000"></div></div>
<div class="sb" style="left:7px;top:557px;width:787px;height:15px"></div>
<div class="btn" style="left:8px;top:557px;width:15px;height:15px"><div class="arr" style="left:3px;top:3px;border-top:4px solid transparent;border-bottom:4px solid transparent;border-right:4px solid #000"></div></div>
<div class="btn" style="left:23px;top:557px;width:745px;height:15px"></div>
<div class="btn" style="left:778px;top:557px;width:15px;height:15px"><div class="arr" style="left:5px;top:3px;border-top:4px solid transparent;border-bottom:4px solid transparent;border-left:4px solid #000"></div></div>
<div class="a" style="left:793px;top:557px;width:15px;height:15px;background:#d4d0c8"></div>
<div class="a" style="left:7px;top:572px;width:802px;height:19px;background:#d4d0c8;border-top:1px solid #808080;border-bottom:1px solid #f4f4f4"></div>
<div class="a mono" style="left:9px;top:576px;font-size:11px;letter-spacing:-.6px;line-height:13px;color:#000"><span style="display:inline-block;margin-right:3px">&lt;body&gt;</span><span style="display:inline-block;margin-right:3px">&lt;table.bian&gt;</span><span style="display:inline-block;margin-right:3px">&lt;tr&gt;</span><span style="display:inline-block;margin-right:3px">&lt;td&gt;</span><span style="display:inline-block;margin-right:3px">&lt;table&gt;</span><span style="display:inline-block;margin-right:3px">&lt;tr&gt;</span><span style="display:inline-block;margin-right:3px">&lt;td&gt;</span></div>
<div class="a" style="left:647px;top:574px;width:68px;height:15px;border:1px solid;border-color:#808080 #fff #fff #808080"></div>
<div class="a mono" style="left:650px;top:576px;font-size:11px;letter-spacing:-.6px;line-height:13px">802 x 266</div>
<div class="arr" style="left:707px;top:582px;border-left:3px solid transparent;border-right:3px solid transparent;border-top:3px solid #000"></div>
<div class="a" style="left:716px;top:574px;width:83px;height:15px;border:1px solid;border-color:#808080 #fff #fff #808080"></div>
<div class="a mono" style="left:719px;top:576px;font-size:11px;letter-spacing:-.6px;line-height:13px">145 K / 21 秒</div>
<div class="a" style="left:384px;top:591px;width:48px;height:6px;background:#c4c4c4"></div><div class="arr" style="left:404px;top:592px;border-left:4px solid transparent;border-right:4px solid transparent;border-top:4px solid #fff"></div>

<div class="a" style="left:7px;top:598px;width:802px;height:141px;background:#d4d0c8"></div>
<div class="hdr" style="left:7px;top:598px;width:802px"><div class="grip"></div><div class="tri"></div><div class="t ui" style="line-height:17px">属性</div></div>
<svg class="a" style="left:796px;top:604px" width="11" height="9" viewBox="0 0 11 9"><path d="M0 1h1.500M3 1h6M0 3.500h1.500M3 3.500h6M0 6h1.500M3 6h3.500" stroke="#202020" stroke-width="1.200"/><path d="M7 6.500h4l-2 2.500z" fill="#202020"/></svg>
<div class="a ui" style="left:13px;top:626px">格式 <span style="font-size:10.5px">(<u>F</u>)</span></div>
<div class="sunk" style="left:60px;top:624px;width:77px;height:19px;background:#fff"><div class="a ui" style="left:4px;top:2px;font-size:12px">无</div><div class="btn" style="right:2px;top:2px;width:16px;height:15px"><div class="arr" style="left:3px;top:4px;border-left:4px solid transparent;border-right:4px solid transparent;border-top:4px solid #000"></div></div></div>
<div class="a ui" style="left:143px;top:626px">样式 <span style="font-size:10.5px">(<u>Y</u>)</span></div>
<div class="sunk" style="left:189px;top:624px;width:141px;height:19px;background:#fff"><div class="a ui" style="left:4px;top:2px;font-size:12px">无</div><div class="btn" style="right:2px;top:2px;width:16px;height:15px"><div class="arr" style="left:3px;top:4px;border-left:4px solid transparent;border-right:4px solid transparent;border-top:4px solid #000"></div></div></div>
<div class="a" style="left:369px;top:624px;width:21px;height:18px;border:1px solid;border-color:#fff #808080 #808080 #fff;background:#d4d0c8"><div class="a" style="left:5px;top:0;font:bold 14px/16px 'Liberation Serif',serif">B</div></div>
<div class="a" style="left:390px;top:624px;width:21px;height:18px;border:1px solid;border-color:#fff #808080 #808080 #fff;background:#d4d0c8"><div class="a" style="left:6px;top:0;font:italic bold 14px/16px 'Liberation Serif',serif">I</div></div>
<div class="a" style="left:420px;top:624px;width:21px;height:18px;border:1px solid;border-color:#fff #808080 #808080 #fff;background:#d4d0c8"><svg class="a" style="left:1px;top:1px" width="17" height="15" viewBox="0 0 17 15"><path d="M4 3.0h9M4 5.5h6M4 8.0h9M4 10.5h6M4 13.0h9" stroke="#000" stroke-width="1.100"/></svg></div>
<div class="a" style="left:441px;top:624px;width:21px;height:18px;border:1px solid;border-color:#fff #808080 #808080 #fff;background:#d4d0c8"><svg class="a" style="left:1px;top:1px" width="17" height="15" viewBox="0 0 17 15"><path d="M4 3.0h9M5.5 5.5h6M4 8.0h9M5.5 10.5h6M4 13.0h9" stroke="#000" stroke-width="1.100"/></svg></div>
<div class="a" style="left:462px;top:624px;width:21px;height:18px;border:1px solid;border-color:#fff #808080 #808080 #fff;background:#d4d0c8"><svg class="a" style="left:1px;top:1px" width="17" height="15" viewBox="0 0 17 15"><path d="M4 3.0h9M7 5.5h6M4 8.0h9M7 10.5h6M4 13.0h9" stroke="#000" stroke-width="1.100"/></svg></div>
<div class="a" style="left:483px;top:624px;width:21px;height:18px;border:1px solid;border-color:#fff #808080 #808080 #fff;background:#d4d0c8"><svg class="a" style="left:1px;top:1px" width="17" height="15" viewBox="0 0 17 15"><path d="M4 3.0h9M4 5.5h9M4 8.0h9M4 10.5h9M4 13.0h9" stroke="#000" stroke-width="1.100"/></svg></div>
<div class="a ui" style="left:510px;top:626px">链接 <span style="font-size:10.5px">(<u>L</u>)</span></div>
<div class="sunk" style="left:556px;top:624px;width:184px;height:19px;background:#fff"><div class="a ui" style="left:4px;top:2px;font-size:12px"></div><div class="btn" style="right:2px;top:2px;width:16px;height:15px"><div class="arr" style="left:3px;top:4px;border-left:4px solid transparent;border-right:4px solid transparent;border-top:4px solid #000"></div></div></div>
<svg class="a" style="left:743px;top:626px" width="14" height="14" viewBox="0 0 14 14"><circle cx="7" cy="7" r="5" fill="#f0f0f0" stroke="#404040" stroke-width="1.100"/><path d="M7 0v5M7 9v5M0 7h5M9 7h5" stroke="#404040" stroke-width="1.100"/></svg>
<svg class="a" style="left:759px;top:626px" width="17" height="14" viewBox="0 0 17 14"><path d="M1 3a1.500 1.500 0 0 1 1.500-1.500h4l1.500 2h7a1 1 0 0 1 1 1V12a1 1 0 0 1-1 1H2a1 1 0 0 1-1-1z" fill="#f8d048" stroke="#a88010" stroke-width=".9"/><path d="M1.500 5.500h14" stroke="#fff0a0" stroke-width="1"/></svg>
<svg class="a" style="left:791px;top:621px" width="14" height="14" viewBox="0 0 14 14"><circle cx="7" cy="7" r="5.800" fill="#fff" stroke="#202020" stroke-width="1.100"/><text x="7" y="10.500" font-size="10" font-weight="bold" font-family="Liberation Sans, sans-serif" text-anchor="middle" fill="#000">?</text></svg>
<svg class="a" style="left:792px;top:635px" width="15" height="14" viewBox="0 0 15 14"><rect x="1" y="5" width="9" height="8" fill="#fff" stroke="#303030"/><path d="M4 10l1-3 6-6 2 2-6 6z" fill="#f0c020" stroke="#604000" stroke-width=".9"/><path d="M4 10l1-3 2 2z" fill="#303030"/></svg>
<div class="a ui" style="left:13px;top:647px">字体 <span style="font-size:10.5px">(<u>O</u>)</span></div>
<div class="sunk" style="left:60px;top:645px;width:77px;height:19px;background:#fff"><div class="a ui" style="left:2px;top:0px;font-size:12px">默认字体</div><div class="btn" style="right:2px;top:2px;width:16px;height:15px"><div class="arr" style="left:3px;top:4px;border-left:4px solid transparent;border-right:4px solid transparent;border-top:4px solid #000"></div></div></div>
<div class="a ui" style="left:143px;top:648px">大小 <span style="font-size:10.5px">(<u>S</u>)</span></div>
<div class="sunk" style="left:189px;top:645px;width:52px;height:19px;background:#fff"><div class="a ui" style="left:4px;top:2px;font-size:11px">13</div><div class="btn" style="right:2px;top:2px;width:16px;height:15px"><div class="arr" style="left:3px;top:4px;border-left:4px solid transparent;border-right:4px solid transparent;border-top:4px solid #000"></div></div></div>
<div class="sunk" style="left:247px;top:645px;width:85px;height:19px;background:#fff"><div class="a ui" style="left:4px;top:2px;font-size:12px">像素<span style="font-size:11px">(px)</span></div><div class="btn" style="right:2px;top:2px;width:16px;height:15px"><div class="arr" style="left:3px;top:4px;border-left:4px solid transparent;border-right:4px solid transparent;border-top:4px solid #000"></div></div></div>
<div class="a" style="left:337px;top:646px;width:19px;height:19px;border:1px solid;border-color:#fff #808080 #808080 #fff"><div class="a" style="left:2px;top:2px;width:14px;height:14px;background:#000066"></div><div class="a" style="right:0;bottom:0;width:7px;height:6px;background:#d4d0c8"></div><div class="arr" style="right:1px;bottom:1px;border-left:3px solid transparent;border-right:3px solid transparent;border-top:3px solid #000"></div></div>
<div class="a" style="left:359px;top:646px;width:59px;height:20px;background:#fff;border:1px solid #e8e6e0;border-top-color:#b8b4ac;border-left-color:#b8b4ac"><div class="a ui" style="left:2px;top:1px;font-size:11px">#000066</div></div>
<div class="a" style="left:420px;top:645px;width:21px;height:18px;border:1px solid;border-color:#fff #808080 #808080 #fff;background:#d4d0c8"><svg class="a" style="left:0;top:0" width="19" height="16" viewBox="0 0 19 16"><path d="M4 4h2v2H4zM4 7.500h2v2H4zM4 11h2v2H4z" fill="#1030a0"/><path d="M8 5h7M8 8.500h7M8 12h7" stroke="#000" stroke-width="1.100"/></svg></div>
<div class="a" style="left:441px;top:645px;width:21px;height:18px;border:1px solid;border-color:#fff #808080 #808080 #fff;background:#d4d0c8"><svg class="a" style="left:0;top:0" width="19" height="16" viewBox="0 0 19 16"><path d="M4.500 3v3M4 7.500h1.500v1L4 9.500h1.500M4 11h1.500v2.500H4" stroke="#1030a0" stroke-width=".9" fill="none"/><path d="M8 5h7M8 8.500h7M8 12h7" stroke="#000" stroke-width="1.100"/></svg></div>
<div class="a" style="left:462px;top:645px;width:21px;height:18px;border:1px solid;border-color:#fff #808080 #808080 #fff;background:#d4d0c8"><svg class="a" style="left:0;top:0" width="19" height="16" viewBox="0 0 19 16"><path d="M8 5h7M8 7.500h7M4 10h11M4 12.500h11" stroke="#000" stroke-width="1.100"/><path d="M7 6.200L3.500 6.200M3.500 6.200l2-2M3.500 6.200l2 2" stroke="#1030a0" stroke-width="1.300" fill="none"/></svg></div>
<div class="a" style="left:483px;top:645px;width:21px;height:18px;border:1px solid;border-color:#fff #808080 #808080 #fff;background:#d4d0c8"><svg class="a" style="left:0;top:0" width="19" height="16" viewBox="0 0 19 16"><path d="M8 5h7M8 7.500h7M4 10h11M4 12.500h11" stroke="#000" stroke-width="1.100"/><path d="M3 6.200h4M7 6.200l-2-2M7 6.200l-2 2" stroke="#1030a0" stroke-width="1.300" fill="none"/></svg></div>
<div class="a ui" style="left:510px;top:647px">目标 <span style="font-size:10.5px">(<u>T</u>)</span></div>
<div class="sunk" style="left:556px;top:645px;width:72px;height:19px;background:#d4d0c8"><div class="a ui" style="left:4px;top:2px;font-size:12px"></div><div class="btn" style="right:2px;top:2px;width:16px;height:15px"><div class="arr" style="left:3px;top:4px;border-left:4px solid transparent;border-right:4px solid transparent;border-top:4px solid #808080"></div></div></div>
<div class="a" style="left:8px;top:667px;width:783px;height:2px;border-top:1px solid #9c988f;border-bottom:1px solid #f4f2ee"></div>
<div class="a" style="left:13px;top:671px;width:36px;height:36px;border:1px solid;border-color:#404040 #fff #fff #404040;background:#d4d0c8"><svg class="a" style="left:4px;top:4px" width="28" height="28" viewBox="0 0 28 28"><rect x="3" y="3" width="23" height="23" fill="#a8a49c"/><rect x="1" y="1" width="23" height="23" fill="#f0f0f0"/><path d="M2 3.500h9M14 3.500h9M2 10.500h9M14 10.500h9M2 17.500h9M14 17.500h9M2.500 3v4M14.500 3v4M2.500 10v4M14.500 10v4M2.500 17v4M14.500 17v4" stroke="#a0a0a0"/><rect x="3" y="11.500" width="7" height="3.500" fill="#707070"/></svg></div>
<div class="a ui" style="left:58px;top:674px">单元格</div>
<div class="a" style="left:57px;top:694px;width:19px;height:18px;border:1px solid;border-color:#fff #808080 #808080 #fff;background:#d4d0c8"><div class="a" style="left:3px;top:5px;width:11px;height:8px;border:1px solid #a0a0a0;background:#e4e0d8"></div><div class="a" style="left:8px;top:6px;width:1px;height:6px;border-left:1px dotted #808080"></div></div>
<div class="a" style="left:78px;top:694px;width:19px;height:18px;border:1px solid;border-color:#fff #808080 #808080 #fff;background:#d4d0c8"><svg class="a" style="left:0;top:0" width="17" height="16" viewBox="0 0 17 16"><path d="M3 4.500h4v7H3M14 4.500h-4v7h4" fill="none" stroke="#000" stroke-width="1.100"/><path d="M6 2l1.500 1.500M11 2L9.500 3.500M6 14l1.500-1.500M11 14l-1.500-1.500" stroke="#2040e0" stroke-width="1"/><path d="M6 8h5" stroke="#2040e0" stroke-dasharray="1 1"/></svg></div>
<div class="a ui" style="left:119px;top:674px">水平 <span style="font-size:10.5px">(<u>Z</u>)</span></div>
<div class="sunk" style="left:163px;top:672px;width:51px;height:19px;background:#fff"><div class="a ui" style="left:2px;top:1px;font-size:12px">默认</div><div class="btn" style="right:2px;top:2px;width:16px;height:15px"><div class="arr" style="left:3px;top:4px;border-left:4px solid transparent;border-right:4px solid transparent;border-top:4px solid #000"></div></div></div>
<div class="a ui" style="left:225px;top:674px">宽 <span style="font-size:10.5px">(<u>W</u>)</span></div>
<div class="a" style="left:256px;top:672px;width:33px;height:18px;background:#fff;border:1px solid #e8e6e0;border-top-color:#b8b4ac;border-left-color:#b8b4ac"><div class="a ui" style="left:2px;top:1px;font-size:11px">193</div></div>
<div class="a ui" style="left:298px;top:674px">不换行 <span style="font-size:10.5px">(<u>O</u>)</span></div>
<div class="a" style="left:354px;top:675px;width:13px;height:13px;background:#fff;border:1px solid;border-color:#808080 #e8e6e0 #e8e6e0 #808080"></div>
<div class="a ui" style="left:378px;top:674px">背景 <span style="font-size:10.5px">(<u>B</u>)</span></div>
<div class="a" style="left:423px;top:672px;width:175px;height:18px;background:#fff;border:1px solid #e8e6e0;border-top-color:#b8b4ac;border-left-color:#b8b4ac"><div class="a ui" style="left:2px;top:1px;font-size:11px"></div></div>
<svg class="a" style="left:601px;top:672px" width="14" height="14" viewBox="0 0 14 14"><circle cx="7" cy="7" r="5" fill="#f0f0f0" stroke="#404040" stroke-width="1.100"/><path d="M7 0v5M7 9v5M0 7h5M9 7h5" stroke="#404040" stroke-width="1.100"/></svg>
<svg class="a" style="left:621px;top:673px" width="17" height="14" viewBox="0 0 17 14"><path d="M1 3a1.500 1.500 0 0 1 1.500-1.500h4l1.500 2h7a1 1 0 0 1 1 1V12a1 1 0 0 1-1 1H2a1 1 0 0 1-1-1z" fill="#f8d048" stroke="#a88010" stroke-width=".9"/><path d="M1.500 5.500h14" stroke="#fff0a0" stroke-width="1"/></svg>
<div class="a ui" style="left:667px;top:671px;width:104px;height:18px;border:1px solid #404040;border-radius:4px;background:#d4d0c8;box-shadow:inset 1px 1px 0 #fff,inset -1px -1px 0 #808080;text-align:center;line-height:15px">页面属性...</div>
<div class="a ui" style="left:119px;top:696px">垂直 <span style="font-size:10.5px">(<u>T</u>)</span></div>
<div class="sunk" style="left:163px;top:694px;width:51px;height:19px;background:#fff"><div class="a ui" style="left:2px;top:1px;font-size:12px">顶端</div><div class="btn" style="right:2px;top:2px;width:16px;height:15px"><div class="arr" style="left:3px;top:4px;border-left:4px solid transparent;border-right:4px solid transparent;border-top:4px solid #000"></div></div></div>
<div class="a ui" style="left:225px;top:696px">高 <span style="font-size:10.5px">(<u>H</u>)</span></div>
<div class="a" style="left:256px;top:694px;width:33px;height:18px;background:#fff;border:1px solid #e8e6e0;border-top-color:#b8b4ac;border-left-color:#b8b4ac"><div class="a ui" style="left:2px;top:1px;font-size:11px">92</div></div>
<div class="a ui" style="left:310px;top:696px">标题 <span style="font-size:10.5px">(<u>E</u>)</span></div>
<div class="a" style="left:354px;top:696px;width:13px;height:13px;background:#fff;border:1px solid;border-color:#808080 #e8e6e0 #e8e6e0 #808080"></div>
<div class="a ui" style="left:385px;top:696px">背景颜色 <span style="font-size:10.5px">(<u>G</u>)</span></div>
<div class="a" style="left:454px;top:694px;width:20px;height:19px;border:1px solid;border-color:#fff #404040 #404040 #fff;box-shadow:inset -1px -1px 0 #808080"><div class="arr" style="right:2px;bottom:2px;border-left:3px solid transparent;border-right:3px solid transparent;border-top:3px solid #000"></div></div>
<div class="a" style="left:475px;top:694px;width:45px;height:18px;background:#fff;border:1px solid #e8e6e0;border-top-color:#b8b4ac;border-left-color:#b8b4ac"><div class="a ui" style="left:2px;top:1px;font-size:11px"></div></div>
<div class="a ui" style="left:530px;top:696px">边框 <span style="font-size:10.5px">(<u>R</u>)</span></div>
<div class="a" style="left:574px;top:694px;width:20px;height:19px;border:1px solid;border-color:#fff #404040 #404040 #fff;box-shadow:inset -1px -1px 0 #808080"><div class="arr" style="right:2px;bottom:2px;border-left:3px solid transparent;border-right:3px solid transparent;border-top:3px solid #000"></div></div>
<div class="a" style="left:596px;top:694px;width:45px;height:18px;background:#fff;border:1px solid #e8e6e0;border-top-color:#b8b4ac;border-left-color:#b8b4ac"><div class="a ui" style="left:2px;top:1px;font-size:11px"></div></div>
<svg class="a" style="left:794px;top:708px" width="11" height="6" viewBox="0 0 11 6"><path d="M1 5.500L5.500 1 10 5.500z" fill="#fff" stroke="#000"/></svg>
<div class="hdr" style="left:7px;top:717px;width:802px"><div class="grip"></div><div class="trir"></div><div class="t ui" style="line-height:17px">结果</div></div>
<div class="a" style="left:8px;top:736px;width:800px;height:3px;background:#d4d0c8"></div>

<div class="a" style="left:816px;top:38px;width:208px;height:702px;background:#d4d0c8"></div>
<div class="hdr" style="left:816px;top:38px;width:208px"><div class="grip"></div><div class="tri"></div><div class="t ui" style="line-height:17px">设计</div><svg class="a" style="left:192px;top:5px" width="11" height="9" viewBox="0 0 11 9"><path d="M0 1h1.500M3 1h6M0 3.500h1.500M3 3.500h6M0 6h1.500M3 6h3.500" stroke="#202020" stroke-width="1.200"/><path d="M7 6.500h4l-2 2.500z" fill="#202020"/></svg></div>
<div class="a" style="left:816px;top:58px;width:208px;height:19px;background:#7b879f"></div>
<svg class="a" style="left:818px;top:60px" width="68" height="18" viewBox="0 0 68 18"><path d="M.5 18V5a4 4 0 0 1 4-4h50c3 0 4 1 5.500 4l7 13z" fill="#d4d0c8" stroke="#f4f4f4"/></svg>
<div class="a ui" style="left:824px;top:62px;font-size:11px">CSS <span style="font-size:12px">样式</span></div>
<div class="a ui" style="left:888px;top:62px;color:#fff">层</div>
<div class="a" style="left:817px;top:82px;width:205px;height:116px;background:#fff;border:1px solid #808080;border-right:0"></div>
<div class="a" style="left:939px;top:83px;width:1px;height:114px;background:#808080"></div>
<div class="a" style="left:847px;top:83px;width:1px;height:73px;border-left:1px dotted #808080"></div>
<div class="a" style="left:847px;top:179px;width:1px;height:9px;border-left:1px dotted #808080"></div>
<div class="a" style="left:848px;top:91px;width:7px;height:1px;border-top:1px dotted #808080"></div>
<div class="a mono sm" style="left:859px;top:85px">td</div>
<div class="a mono sm" style="left:943px;top:85px">13px #0...</div>
<div class="a" style="left:848px;top:107px;width:7px;height:1px;border-top:1px dotted #808080"></div>
<div class="a mono sm" style="left:859px;top:101px">.text</div>
<div class="a mono sm" style="left:943px;top:101px">line-he...</div>
<div class="a" style="left:848px;top:123px;width:7px;height:1px;border-top:1px dotted #808080"></div>
<div class="a mono sm" style="left:859px;top:117px">.a1</div>
<div class="a mono sm" style="left:943px;top:117px">#FFFFFF...</div>
<div class="a" style="left:848px;top:139px;width:7px;height:1px;border-top:1px dotted #808080"></div>
<div class="a mono sm" style="left:859px;top:133px">.txt</div>
<div class="a mono sm" style="left:943px;top:133px">12px pa...</div>
<div class="a" style="left:848px;top:155px;width:7px;height:1px;border-top:1px dotted #808080"></div>
<div class="a mono sm" style="left:859px;top:149px">.bian</div>
<div class="a mono sm" style="left:943px;top:149px">border-...</div>
<div class="a" style="left:825px;top:167px;width:9px;height:9px;border:1px solid #808080;background:#fff"><div class="a" style="left:1px;top:3px;width:5px;height:1px;background:#000"></div></div>
<div class="a ui" style="left:843px;top:164px;font-size:12px">&lt;样式&gt;</div>
<div class="a" style="left:848px;top:187px;width:7px;height:1px;border-top:1px dotted #808080"></div>
<div class="a mono sm" style="left:859px;top:181px">.style1</div>
<div class="a mono sm" style="left:943px;top:181px">#FFFFFF</div>
<div class="sb" style="left:1006px;top:83px;width:16px;height:114px"></div>
<div class="btn" style="left:1006px;top:83px;width:16px;height:15px"><div class="arr" style="left:3px;top:4px;border-left:4px solid transparent;border-right:4px solid transparent;border-bottom:4px solid #000"></div></div>
<div class="btn" style="left:1006px;top:109px;width:16px;height:71px"></div>
<div class="btn" style="left:1006px;top:182px;width:16px;height:15px"><div class="arr" style="left:3px;top:5px;border-left:4px solid transparent;border-right:4px solid transparent;border-top:4px solid #000"></div></div>
<svg class="a" style="left:946px;top:203px" width="15" height="13" viewBox="0 0 15 13"><rect x="5" y="1.500" width="9.500" height="11" fill="#000"/><rect x="4" y=".5" width="9.500" height="11" fill="#fff" stroke="#2838b0" stroke-width=".8"/><text x="9.800" y="10" font-size="10" font-weight="bold" font-style="italic" font-family="Liberation Serif, serif" text-anchor="middle" fill="#3040c8">S</text><path d="M1 6.500h6M3 4.500L.8 6.500 3 8.500M5 4.500l2.200 2L5 8.500" stroke="#1828c0" stroke-width="1.300" fill="none"/></svg>
<svg class="a" style="left:967px;top:203px" width="13" height="13" viewBox="0 0 13 13"><path d="M4.500 1.500h5l3 3v8h-8z" fill="#000"/><path d="M3.500.500h5l3 3v8h-8z" fill="#c8c8f4" stroke="#5050a0" stroke-width=".6"/><path d="M8.500.5v3h3" fill="#e8e8ff" stroke="#5050a0" stroke-width=".6"/><path d="M.5 6.500h6M3.500 3.500v6" stroke="#000" stroke-width="2"/></svg>
<svg class="a" style="left:986px;top:203px" width="16" height="12" viewBox="0 0 16 12"><path d="M1 2.500h9M1 4.500h8M1 6.500h6M1 8.500h14M1 10.500h14" stroke="#a4a4a4" stroke-dasharray="1.500 .5"/><path d="M6 8.500L14 .5l1.500 1L9 9.500z" fill="#909090"/><path d="M5 10l1-2 2 1.500z" fill="#909090"/></svg>
<svg class="a" style="left:1008px;top:203px" width="12" height="13" viewBox="0 0 12 13"><path d="M1.500 3.500h9v8.500h-9z" fill="#fff" stroke="#989898" stroke-width="1.200"/><path d="M.5 3h11M4 1.500h4" stroke="#989898" stroke-width="1.400"/><path d="M4 5v6M6 5v6M8 5v6" stroke="#989898" stroke-width="1"/></svg>
<div class="hdr" style="left:816px;top:218px;width:208px"><div class="grip"></div><div class="trir"></div><div class="t ui" style="line-height:17px">代码</div></div>
<div class="hdr" style="left:816px;top:238px;width:208px"><div class="grip"></div><div class="trir"></div><div class="t ui" style="line-height:17px">应用程序</div></div>
<div class="hdr" style="left:816px;top:258px;width:208px"><div class="grip"></div><div class="trir"></div><div class="t ui" style="line-height:17px">标签检查器</div></div>
<div class="hdr" style="left:816px;top:278px;width:208px"><div class="grip"></div><div class="tri"></div><div class="t ui" style="line-height:17px">文件</div><svg class="a" style="left:192px;top:5px" width="11" height="9" viewBox="0 0 11 9"><path d="M0 1h1.500M3 1h6M0 3.500h1.500M3 3.500h6M0 6h1.500M3 6h3.500" stroke="#202020" stroke-width="1.200"/><path d="M7 6.500h4l-2 2.500z" fill="#202020"/></svg></div>
<div class="a" style="left:816px;top:298px;width:208px;height:19px;background:#7b879f"></div>
<svg class="a" style="left:818px;top:300px" width="46" height="18" viewBox="0 0 46 18"><path d="M.5 18V5a4 4 0 0 1 4-4h28c3 0 4 1 5.500 4l7 13z" fill="#d4d0c8" stroke="#f4f4f4"/></svg>
<div class="a ui" style="left:825px;top:302px">文件</div>
<div class="a ui" style="left:866px;top:302px;color:#fff">资源</div>
<div class="sunk" style="left:821px;top:322px;width:118px;height:20px"><svg class="a" style="left:1px;top:2px" width="17" height="14" viewBox="0 0 17 14"><path d="M1 3a1.500 1.500 0 0 1 1.500-1.500h4l1.500 2h7a1 1 0 0 1 1 1V12a1 1 0 0 1-1 1H2a1 1 0 0 1-1-1z" fill="#98d048" stroke="#508010" stroke-width=".9"/><path d="M1.500 6h14v6.500h-14z" fill="#b8e868"/></svg><div class="a ui" style="left:22px;top:2px">亿强电子</div><div class="btn" style="right:2px;top:2px;width:15px;height:16px"><div class="arr" style="left:3px;top:5px;border-left:4px solid transparent;border-right:4px solid transparent;border-top:4px solid #000"></div></div></div>
<div class="sunk" style="left:946px;top:322px;width:74px;height:20px"><div class="a ui" style="left:3px;top:2px">本地视图</div><div class="btn" style="right:2px;top:2px;width:15px;height:16px"><div class="arr" style="left:3px;top:5px;border-left:4px solid transparent;border-right:4px solid transparent;border-top:4px solid #000"></div></div></div>
<svg class="a" style="left:825px;top:346px" width="18" height="18" viewBox="0 0 18 18"><g transform="rotate(45 9 9)"><path d="M3.500 6.500h4.500l2 2.500-2 2.500H3.500z" fill="#78c0f0" stroke="#2060b0" stroke-width=".9"/><path d="M14.500 6.500H11L9 9l2 2.500h3.500z" fill="#78c0f0" stroke="#2060b0" stroke-width=".9" transform="translate(2.500 0)"/><path d="M1 9h2.500" stroke="#2060b0" stroke-width="1.500"/></g><circle cx="3.500" cy="14" r="2.200" fill="#d8d8d8" stroke="#686868" stroke-width="1.100"/></svg>
<svg class="a" style="left:854px;top:347px" width="16" height="16" viewBox="0 0 16 16"><path d="M12.500 9a5 5 0 1 1-2.500-5" fill="none" stroke="#4048b0" stroke-width="3"/><path d="M8 0l6 1.500-2.500 5z" fill="#4048b0"/></svg>
<div class="a" style="left:879px;top:345px;width:2px;height:20px;border-left:1px solid #484848;border-right:1px solid #e8e6e0"></div>
<svg class="a" style="left:889px;top:347px" width="15" height="16" viewBox="0 0 15 16"><path d="M5 1.500h5v6.500h3L7.500 14.500 2 8h3z" fill="#a0e8a0" stroke="#308030" stroke-width=".9"/><path d="M6 2.500v6" stroke="#d8f8d8" stroke-width="1"/></svg>
<svg class="a" style="left:916px;top:347px" width="15" height="16" viewBox="0 0 15 16"><path d="M5 14.500h5V8h3L7.500 1.500 2 8h3z" fill="#98ccf8" stroke="#2c62b0" stroke-width=".9"/><path d="M6 8v5.500" stroke="#d8ecff" stroke-width="1"/></svg>
<svg class="a" style="left:942px;top:346px" width="18" height="17" viewBox="0 0 18 17"><path d="M4 2.500h4.500V9h3L6.200 15.500 1 9h3z" fill="#a0e8a0" stroke="#308030" stroke-width=".9"/><path d="M11 5l2 2.500L17 1" stroke="#000" stroke-width="1.600" fill="none"/></svg>
<svg class="a" style="left:970px;top:346px" width="17" height="17" viewBox="0 0 17 17"><path d="M4 14h4.500V8h3L6.200 1.500 1 8h3z" fill="#98ccf8" stroke="#2c62b0" stroke-width=".9"/><rect x="8.500" y="10" width="7" height="6" fill="#f0b020" stroke="#805000"/><path d="M10 10V8.500a2 2 0 0 1 4 0V10" fill="none" stroke="#805000" stroke-width="1.200"/></svg>
<div class="a" style="left:995px;top:345px;width:2px;height:20px;border-left:1px solid #484848;border-right:1px solid #e8e6e0"></div>
<svg class="a" style="left:1004px;top:347px" width="15" height="15" viewBox="0 0 15 15"><rect x=".6" y=".6" width="13.500" height="13" fill="#fff" stroke="#4878d0" stroke-width="1.200"/><rect x=".6" y=".6" width="13.500" height="3" fill="#4878d0"/><path d="M7.500 4v10" stroke="#4878d0"/><path d="M3 9h6M7 7l2.500 2L7 11" stroke="#208020" stroke-width="1.200" fill="none"/></svg>
<div class="a" style="left:816px;top:368px;width:190px;height:310px;background:#fff;border-top:1px solid #808080;overflow:hidden" id="fl">
<div class="a" style="left:32px;top:0;width:1px;height:300px;border-left:1px dotted #808080"></div>
<div class="a" style="left:56px;top:0;width:1px;height:283px;border-left:1px dotted #808080"></div>
<div class="a" style="left:57px;top:11px;width:12px;height:1px;border-top:1px dotted #808080"></div>
<svg class="a" style="left:70px;top:3px" width="14" height="16" viewBox="0 0 14 16"><path d="M.5.500h9.500l3.500 3.500v11.500H.5z" fill="#fff" stroke="#606060"/><path d="M10 .5v3.500h3.500" fill="#e0e0e0" stroke="#606060"/><rect x="2.500" y="5" width="8" height="7" fill="#a8a8a8" stroke="#707070"/><rect x="4" y="7.500" width="5" height="3.500" fill="#38a038"/><circle cx="5" cy="7" r="1" fill="#e8e8e8"/></svg>
<div class="a mono sm" style="left:96px;top:4px">256.jpg</div>
<div class="a" style="left:57px;top:28px;width:12px;height:1px;border-top:1px dotted #808080"></div>
<svg class="a" style="left:70px;top:20px" width="14" height="16" viewBox="0 0 14 16"><path d="M.5.500h9.500l3.500 3.500v11.500H.5z" fill="#fff" stroke="#606060"/><path d="M10 .5v3.500h3.500" fill="#e0e0e0" stroke="#606060"/><rect x="2.500" y="5" width="8" height="7" fill="#a8a8a8" stroke="#707070"/><rect x="4" y="7.500" width="5" height="3.500" fill="#38a038"/><circle cx="5" cy="7" r="1" fill="#e8e8e8"/></svg>
<div class="a mono sm" style="left:96px;top:21px">257-s.jpg</div>
<div class="a" style="left:57px;top:45px;width:12px;height:1px;border-top:1px dotted #808080"></div>
<svg class="a" style="left:70px;top:37px" width="14" height="16" viewBox="0 0 14 16"><path d="M.5.500h9.500l3.500 3.500v11.500H.5z" fill="#fff" stroke="#606060"/><path d="M10 .5v3.500h3.500" fill="#e0e0e0" stroke="#606060"/><rect x="2.500" y="5" width="8" height="7" fill="#a8a8a8" stroke="#707070"/><rect x="4" y="7.500" width="5" height="3.500" fill="#38a038"/><circle cx="5" cy="7" r="1" fill="#e8e8e8"/></svg>
<div class="a mono sm" style="left:96px;top:38px">257.jpg</div>
<div class="a" style="left:57px;top:62px;width:12px;height:1px;border-top:1px dotted #808080"></div>
<svg class="a" style="left:70px;top:54px" width="14" height="16" viewBox="0 0 14 16"><path d="M.5.500h9.500l3.500 3.500v11.500H.5z" fill="#fff" stroke="#606060"/><path d="M10 .5v3.500h3.500" fill="#e0e0e0" stroke="#606060"/><rect x="2.500" y="5" width="8" height="7" fill="#a8a8a8" stroke="#707070"/><rect x="4" y="7.500" width="5" height="3.500" fill="#38a038"/><circle cx="5" cy="7" r="1" fill="#e8e8e8"/></svg>
<div class="a mono sm" style="left:96px;top:55px">TIK510-50-s.jpg</div>
<div class="a" style="left:57px;top:79px;width:12px;height:1px;border-top:1px dotted #808080"></div>
<svg class="a" style="left:70px;top:71px" width="14" height="16" viewBox="0 0 14 16"><path d="M.5.500h9.500l3.500 3.500v11.500H.5z" fill="#fff" stroke="#606060"/><path d="M10 .5v3.500h3.500" fill="#e0e0e0" stroke="#606060"/><rect x="2.500" y="5" width="8" height="7" fill="#a8a8a8" stroke="#707070"/><rect x="4" y="7.500" width="5" height="3.500" fill="#38a038"/><circle cx="5" cy="7" r="1" fill="#e8e8e8"/></svg>
<div class="a mono sm" style="left:96px;top:72px">TIK510-50.jpg</div>
<div class="a" style="left:57px;top:96px;width:12px;height:1px;border-top:1px dotted #808080"></div>
<svg class="a" style="left:70px;top:88px" width="14" height="16" viewBox="0 0 14 16"><path d="M.5.500h9.500l3.500 3.500v11.500H.5z" fill="#fff" stroke="#606060"/><path d="M10 .5v3.500h3.500" fill="#e0e0e0" stroke="#606060"/><rect x="2.500" y="5" width="8" height="7" fill="#a8a8a8" stroke="#707070"/><rect x="4" y="7.500" width="5" height="3.500" fill="#38a038"/><circle cx="5" cy="7" r="1" fill="#e8e8e8"/></svg>
<div class="a mono sm" style="left:96px;top:89px">TIK510-53-s.jpg</div>
<div class="a" style="left:57px;top:113px;width:12px;height:1px;border-top:1px dotted #808080"></div>
<svg class="a" style="left:70px;top:105px" width="14" height="16" viewBox="0 0 14 16"><path d="M.5.500h9.500l3.500 3.500v11.500H.5z" fill="#fff" stroke="#606060"/><path d="M10 .5v3.500h3.500" fill="#e0e0e0" stroke="#606060"/><rect x="2.500" y="5" width="8" height="7" fill="#a8a8a8" stroke="#707070"/><rect x="4" y="7.500" width="5" height="3.500" fill="#38a038"/><circle cx="5" cy="7" r="1" fill="#e8e8e8"/></svg>
<div class="a mono sm" style="left:96px;top:106px">TIK510-53.jpg</div>
<div class="a" style="left:57px;top:130px;width:12px;height:1px;border-top:1px dotted #808080"></div>
<svg class="a" style="left:70px;top:122px" width="14" height="16" viewBox="0 0 14 16"><path d="M.5.500h9.500l3.500 3.500v11.500H.5z" fill="#fff" stroke="#606060"/><path d="M10 .5v3.500h3.500" fill="#e0e0e0" stroke="#606060"/><rect x="2.500" y="5" width="8" height="7" fill="#a8a8a8" stroke="#707070"/><rect x="4" y="7.500" width="5" height="3.500" fill="#38a038"/><circle cx="5" cy="7" r="1" fill="#e8e8e8"/></svg>
<div class="a mono sm" style="left:96px;top:123px">TIK510-54-s.jpg</div>
<div class="a" style="left:57px;top:147px;width:12px;height:1px;border-top:1px dotted #808080"></div>
<svg class="a" style="left:70px;top:139px" width="14" height="16" viewBox="0 0 14 16"><path d="M.5.500h9.500l3.500 3.500v11.500H.5z" fill="#fff" stroke="#606060"/><path d="M10 .5v3.500h3.500" fill="#e0e0e0" stroke="#606060"/><rect x="2.500" y="5" width="8" height="7" fill="#a8a8a8" stroke="#707070"/><rect x="4" y="7.500" width="5" height="3.500" fill="#38a038"/><circle cx="5" cy="7" r="1" fill="#e8e8e8"/></svg>
<div class="a mono sm" style="left:96px;top:140px">TIK510-54.jpg</div>
<div class="a" style="left:57px;top:164px;width:12px;height:1px;border-top:1px dotted #808080"></div>
<svg class="a" style="left:70px;top:156px" width="14" height="16" viewBox="0 0 14 16"><path d="M.5.500h9.500l3.500 3.500v11.500H.5z" fill="#fff" stroke="#606060"/><path d="M10 .5v3.500h3.500" fill="#e0e0e0" stroke="#606060"/><rect x="2.500" y="5" width="8" height="7" fill="#a8a8a8" stroke="#707070"/><rect x="4" y="7.500" width="5" height="3.500" fill="#38a038"/><circle cx="5" cy="7" r="1" fill="#e8e8e8"/></svg>
<div class="a mono sm" style="left:96px;top:157px">TIK510-55-s.jpg</div>
<div class="a" style="left:57px;top:181px;width:12px;height:1px;border-top:1px dotted #808080"></div>
<svg class="a" style="left:70px;top:173px" width="14" height="16" viewBox="0 0 14 16"><path d="M.5.500h9.500l3.500 3.500v11.500H.5z" fill="#fff" stroke="#606060"/><path d="M10 .5v3.500h3.500" fill="#e0e0e0" stroke="#606060"/><rect x="2.500" y="5" width="8" height="7" fill="#a8a8a8" stroke="#707070"/><rect x="4" y="7.500" width="5" height="3.500" fill="#38a038"/><circle cx="5" cy="7" r="1" fill="#e8e8e8"/></svg>
<div class="a mono sm" style="left:96px;top:174px">TIK510-55.jpg</div>
<div class="a" style="left:57px;top:198px;width:12px;height:1px;border-top:1px dotted #808080"></div>
<svg class="a" style="left:70px;top:190px" width="14" height="16" viewBox="0 0 14 16"><path d="M.5.500h9.500l3.500 3.500v11.500H.5z" fill="#fff" stroke="#606060"/><path d="M10 .5v3.500h3.500" fill="#e0e0e0" stroke="#606060"/><rect x="2.500" y="5" width="8" height="7" fill="#a8a8a8" stroke="#707070"/><rect x="4" y="7.500" width="5" height="3.500" fill="#38a038"/><circle cx="5" cy="7" r="1" fill="#e8e8e8"/></svg>
<div class="a mono sm" style="left:96px;top:191px">yj1.jpg</div>
<div class="a" style="left:57px;top:215px;width:12px;height:1px;border-top:1px dotted #808080"></div>
<svg class="a" style="left:70px;top:207px" width="14" height="16" viewBox="0 0 14 16"><path d="M.5.500h9.500l3.500 3.500v11.500H.5z" fill="#fff" stroke="#606060"/><path d="M10 .5v3.500h3.500" fill="#e0e0e0" stroke="#606060"/><rect x="2.500" y="5" width="8" height="7" fill="#a8a8a8" stroke="#707070"/><rect x="4" y="7.500" width="5" height="3.500" fill="#38a038"/><circle cx="5" cy="7" r="1" fill="#e8e8e8"/></svg>
<div class="a mono sm" style="left:96px;top:208px">yj1_1.jpg</div>
<div class="a" style="left:57px;top:232px;width:12px;height:1px;border-top:1px dotted #808080"></div>
<svg class="a" style="left:70px;top:224px" width="14" height="16" viewBox="0 0 14 16"><path d="M.5.500h9.500l3.500 3.500v11.500H.5z" fill="#fff" stroke="#606060"/><path d="M10 .5v3.500h3.500" fill="#e0e0e0" stroke="#606060"/><rect x="2.500" y="5" width="8" height="7" fill="#a8a8a8" stroke="#707070"/><rect x="4" y="7.500" width="5" height="3.500" fill="#38a038"/><circle cx="5" cy="7" r="1" fill="#e8e8e8"/></svg>
<div class="a mono sm" style="left:96px;top:225px">yj2.jpg</div>
<div class="a" style="left:57px;top:249px;width:12px;height:1px;border-top:1px dotted #808080"></div>
<svg class="a" style="left:70px;top:241px" width="14" height="16" viewBox="0 0 14 16"><path d="M.5.500h9.500l3.500 3.500v11.500H.5z" fill="#fff" stroke="#606060"/><path d="M10 .5v3.500h3.500" fill="#e0e0e0" stroke="#606060"/><rect x="2.500" y="5" width="8" height="7" fill="#a8a8a8" stroke="#707070"/><rect x="4" y="7.500" width="5" height="3.500" fill="#38a038"/><circle cx="5" cy="7" r="1" fill="#e8e8e8"/></svg>
<div class="a mono sm" style="left:96px;top:242px">yj2_1.jpg</div>
<div class="a" style="left:57px;top:266px;width:12px;height:1px;border-top:1px dotted #808080"></div>
<svg class="a" style="left:70px;top:258px" width="14" height="16" viewBox="0 0 14 16"><path d="M.5.500h9.500l3.500 3.500v11.500H.5z" fill="#fff" stroke="#606060"/><path d="M10 .5v3.500h3.500" fill="#e0e0e0" stroke="#606060"/><rect x="2.500" y="5" width="8" height="7" fill="#a8a8a8" stroke="#707070"/><rect x="4" y="7.500" width="5" height="3.500" fill="#38a038"/><circle cx="5" cy="7" r="1" fill="#e8e8e8"/></svg>
<div class="a mono sm" style="left:96px;top:259px">yj3.jpg</div>
<div class="a" style="left:57px;top:283px;width:12px;height:1px;border-top:1px dotted #808080"></div>
<svg class="a" style="left:70px;top:275px" width="14" height="16" viewBox="0 0 14 16"><path d="M.5.500h9.500l3.500 3.500v11.500H.5z" fill="#fff" stroke="#606060"/><path d="M10 .5v3.500h3.500" fill="#e0e0e0" stroke="#606060"/><rect x="2.500" y="5" width="8" height="7" fill="#a8a8a8" stroke="#707070"/><rect x="4" y="7.500" width="5" height="3.500" fill="#38a038"/><circle cx="5" cy="7" r="1" fill="#e8e8e8"/></svg>
<div class="a mono sm" style="left:96px;top:276px">yj3_1.jpg</div>
<div class="a" style="left:0;top:291px;width:190px;height:18px;background:#d4d0c8"></div>
<div class="a" style="left:32px;top:291px;width:1px;height:9px;border-left:1px dotted #808080"></div>
<div class="a" style="left:33px;top:299px;width:11px;height:1px;border-top:1px dotted #808080"></div>
<svg class="a" style="left:44px;top:291px" width="14" height="16" viewBox="0 0 14 16"><path d="M1.500 2.500h11v13h-11z" fill="#fff" stroke="#404040"/><path d="M2 1.500v2M4 1.500v2M6 1.500v2M8 1.500v2M10 1.500v2M12 1.500v2" stroke="#404040" stroke-width=".8"/><path d="M4 6.500h6M4 8.500h6M4 10.500h6M4 12.500h6" stroke="#202020"/></svg>
<div class="a mono sm" style="left:74px;top:292px">fgh.css</div>
</div>
<div class="sb" style="left:1006px;top:370px;width:16px;height:308px"></div>
<div class="btn" style="left:1006px;top:370px;width:16px;height:15px"><div class="arr" style="left:3px;top:4px;border-left:4px solid transparent;border-right:4px solid transparent;border-bottom:4px solid #000"></div></div>
<div class="btn" style="left:1006px;top:510px;width:16px;height:128px"></div>
<div class="btn" style="left:1006px;top:663px;width:16px;height:15px"><div class="arr" style="left:3px;top:5px;border-left:4px solid transparent;border-right:4px solid transparent;border-top:4px solid #000"></div></div>
<div class="sb" style="left:816px;top:678px;width:190px;height:15px"></div>
<div class="btn" style="left:816px;top:678px;width:15px;height:15px"><div class="arr" style="left:3px;top:3px;border-top:4px solid transparent;border-bottom:4px solid transparent;border-right:4px solid #000"></div></div>
<div class="btn" style="left:831px;top:678px;width:63px;height:15px"></div>
<div class="btn" style="left:991px;top:678px;width:15px;height:15px"><div class="arr" style="left:5px;top:3px;border-top:4px solid transparent;border-bottom:4px solid transparent;border-left:4px solid #000"></div></div>
<div class="a" style="left:1006px;top:678px;width:18px;height:15px;background:#d4d0c8"></div>
<div class="a ui" style="left:825px;top:699px;font-size:12px;width:197px;overflow:hidden"><span style="font-size:11px">1</span> 个本地项目被选中，总共 <span style="font-size:11px">381</span> 个字节</div>
<div class="hdr" style="left:816px;top:714px;width:208px"><div class="grip"></div><div class="trir"></div><div class="t ui" style="line-height:17px">历史记录</div></div>
<div class="a" style="left:960px;top:736px;width:30px;height:1px;border-top:1px dotted #fff"></div>
<div class="a" style="left:942px;top:20px;width:35px;height:34px;background:rgba(220,214,196,.88);border:3px solid rgba(236,206,120,.9)"></div>
<svg class="a" style="left:949px;top:26px" width="21" height="21" viewBox="0 0 21 21"><g fill="none" stroke="#6a6a6a" stroke-width="1"><circle cx="10.500" cy="10.500" r="8.500"/><circle cx="10.500" cy="10.500" r="5.500"/><circle cx="10.500" cy="10.500" r="2"/><path d="M10.500 1v7M10.500 13v7M1 10.500h7M13 10.500h7M8.500 3.500h4M8.500 5.500h4M8.500 15.500h4M8.500 17.500h4M3.500 8.500v4M5.500 8.500v4M15.500 8.500v4M17.500 8.500v4"/></g></svg>

<div class="a" style="left:0;top:738px;width:1024px;height:30px;background:#d4d0c8;border-top:1px solid #fff"></div>
<div class="a" style="left:0;top:737px;width:1024px;height:1px;background:#808080"></div>
<div class="btn" style="left:3px;top:744px;width:49px;height:22px"></div>
<svg class="a" style="left:6px;top:747px" width="17" height="17" viewBox="0 0 17 17"><path d="M1 3h1M1 5.500h2M1 8h1M1 10.500h2M1 13h1M3.500 4h1M3.500 12h1" stroke="#000"/><path d="M5 2.500c2-1 3.500-1 5 0v5c-1.500-1-3-1-5 0z" fill="#e03020"/><path d="M10.500 3c1.500 1 3 1 5-.5v5c-2 1.500-3.500 1.500-5 .5z" fill="#30b030"/><path d="M5 8.500c2-1 3.500-1 5 0v5c-1.500-1-3-1-5 0z" fill="#2848d8"/><path d="M10.500 9c1.500 1 3 1 5-.5v5c-2 1.500-3.500 1.500-5 .5z" fill="#f0c820"/><path d="M5 2v12.500M10.200 2.500v12M15.500 2v12" stroke="#000" stroke-width=".9" fill="none"/></svg>
<div class="a ui" style="left:24px;top:748px;font-weight:bold;font-size:12px">开始</div>
<div class="a" style="left:54px;top:744px;width:2px;height:22px;border-left:1px solid #808080;border-right:1px solid #fff"></div><div class="a" style="left:57px;top:745px;width:3px;height:20px;border:1px solid;border-color:#fff #808080 #808080 #fff"></div>
<svg class="a" style="left:69px;top:747px" width="17" height="17" viewBox="0 0 17 17"><circle cx="8.500" cy="8.500" r="8" fill="#2868d8" stroke="#0838a0"/><circle cx="7" cy="6" r="4" fill="#68a8f8" opacity=".5"/><text x="8.500" y="12.500" font-size="11" font-weight="bold" font-family="Liberation Sans, sans-serif" text-anchor="middle" fill="#fff">m</text></svg>
<svg class="a" style="left:92px;top:747px" width="17" height="17" viewBox="0 0 17 17"><rect width="17" height="17" fill="#0818c0"/><rect x="0" y="9" width="17" height="8" fill="#000"/><path d="M3 3h4v3H3zM10 2h4v3h-4zM2 10h4v3H2zM10 11h5v3h-5z" fill="#e0f0ff"/><path d="M5 6l6 5M12 5L5 10" stroke="#40e0e0" stroke-width="1.200"/></svg>
<svg class="a" style="left:115px;top:746px" width="18" height="19" viewBox="0 0 18 19"><rect x="2" y="3" width="14" height="11" rx="2" fill="#f8d028" stroke="#a07000"/><circle cx="6.500" cy="7.500" r="1" fill="#402000"/><circle cx="11.500" cy="7.500" r="1" fill="#402000"/><path d="M6 10.500c1.500 1.500 4.500 1.500 6 0" stroke="#402000" fill="none"/><path d="M4 2c2-2 8-2 10 0" stroke="#e04020" stroke-width="2" fill="none"/><path d="M5 15l-1 3h10l-1-3" fill="#f0a020" stroke="#a05000"/><path d="M1 4l3 1M17 4l-3 1" stroke="#30a030" stroke-width="1.500"/></svg>
<svg class="a" style="left:137px;top:746px" width="18" height="19" viewBox="0 0 18 19"><rect x="1" y="5" width="13" height="13" fill="#fff" stroke="#2878c8" stroke-width="1.600"/><path d="M3 14l2-5 9-8 3 3-9 8z" fill="#f8e080" stroke="#504000"/><path d="M3 14l2-5 3 3z" fill="#f0b0a0" stroke="#504000" stroke-width=".6"/><rect x="2.500" y="12" width="5" height="4.500" fill="#4898e0"/></svg>
<div class="a ui" style="left:163px;top:745px;font-weight:bold;font-size:11px;letter-spacing:-1px">»</div>
<div class="a" style="left:175px;top:744px;width:2px;height:22px;border-left:1px solid #808080;border-right:1px solid #fff"></div><div class="a" style="left:178px;top:745px;width:3px;height:20px;border:1px solid;border-color:#fff #808080 #808080 #fff"></div>
<div class="btn" style="left:185px;top:744px;width:87px;height:22px"></div>
<svg class="a" style="left:189px;top:747px" width="17" height="17" viewBox="0 0 17 17"><path d="M1 4h5l1.500 2H15v9H1z" fill="#f8d868" stroke="#806010"/><circle cx="7" cy="8" r="3.500" fill="#d8f0ff" stroke="#2060c0" stroke-width="1.500"/><path d="M9.500 10.500l4 4.500" stroke="#2060c0" stroke-width="2.200"/></svg>
<div class="a ui" style="left:207px;top:748px;font-size:11.5px;letter-spacing:-.25px;width:64px;overflow:hidden">product</div>
<div class="btn" style="left:275px;top:744px;width:87px;height:22px"></div>
<svg class="a" style="left:279px;top:747px" width="17" height="17" viewBox="0 0 17 17"><path d="M3.500 2.500h9l3 3v10h-12z" fill="#fff" stroke="#606060"/><rect x=".5" y="3.500" width="10" height="9" fill="#2040c0" stroke="#102080"/><text x="5.500" y="11" font-size="8" font-weight="bold" font-family="Liberation Sans, sans-serif" text-anchor="middle" fill="#fff">W</text></svg>
<div class="a ui" style="left:297px;top:748px;font-size:11.5px;letter-spacing:-.25px;width:64px;overflow:hidden">亿强网站...</div>
<div class="btn" style="left:365px;top:744px;width:87px;height:22px"></div>
<svg class="a" style="left:369px;top:747px" width="17" height="17" viewBox="0 0 17 17"><rect x="1" y="6" width="13" height="10" fill="#88a8d8" stroke="#304878"/><circle cx="8" cy="7.500" r="6.500" fill="#f0e8d0" stroke="#202060" stroke-width="1.200"/><circle cx="8.500" cy="7.500" r="4" fill="#2848a8"/><path d="M7 5l4.500 2.500L7 10z" fill="#f0b020"/></svg>
<div class="a ui" style="left:387px;top:748px;font-size:11.5px;letter-spacing:-.25px;width:64px;overflow:hidden">Adobe Ph...</div>
<div class="btn" style="left:455px;top:744px;width:87px;height:22px"></div>
<svg class="a" style="left:459px;top:747px" width="17" height="17" viewBox="0 0 17 17"><circle cx="8.500" cy="8.500" r="8" fill="#2868d8" stroke="#0838a0"/><circle cx="7" cy="6" r="4" fill="#68a8f8" opacity=".5"/><text x="8.500" y="12.500" font-size="11" font-weight="bold" font-family="Liberation Sans, sans-serif" text-anchor="middle" fill="#fff">m</text></svg>
<div class="a ui" style="left:477px;top:748px;font-size:11.5px;letter-spacing:-.25px;width:64px;overflow:hidden">MyIE2 - [...</div>
<div class="btn" style="left:545px;top:744px;width:87px;height:22px"></div>
<svg class="a" style="left:549px;top:747px" width="17" height="17" viewBox="0 0 17 17"><path d="M5.500 2.500h8l2 2v11h-10z" fill="#fff" stroke="#606060"/><circle cx="6.500" cy="8" r="4.500" fill="none" stroke="#2070d8" stroke-width="2.200"/><path d="M2.500 8.500h8" stroke="#2070d8" stroke-width="1.800"/><path d="M1 5c3-4 9-3 10-1" stroke="#2070d8" stroke-width="1.200" fill="none"/></svg>
<div class="a ui" style="left:567px;top:748px;font-size:11.5px;letter-spacing:-.25px;width:64px;overflow:hidden">无标题文...</div>
<div class="a" style="left:635px;top:744px;width:87px;height:22px;border:1px solid;border-color:#404040 #fff #fff #404040;box-shadow:inset 1px 1px 0 #808080;background-color:#ecebe7;background-image:repeating-conic-gradient(#fff 0 25%,#d4d0c8 0 50%);background-size:2px 2px"></div>
<svg class="a" style="left:640px;top:748px" width="17" height="17" viewBox="0 0 17 17"><circle cx="8.500" cy="8.500" r="8" fill="#3c9a2c"/><circle cx="8.500" cy="8.500" r="6.300" fill="#9be04a"/><circle cx="8" cy="8" r="5" fill="#58b830"/><path d="M9.500 4.500v6.200a2 2 0 1 1-1.300-1.900V4.500z" fill="#0a3c10"/><path d="M9.500 4.500c1.500.3 2.500 1.200 2.800 2.600" stroke="#0a3c10" stroke-width="1.200" fill="none"/></svg>
<div class="a ui" style="left:658px;top:749px;font-size:11.5px;letter-spacing:-.25px;width:64px;overflow:hidden">Macromedi...</div>
<div class="btn" style="left:725px;top:744px;width:87px;height:22px"></div>
<svg class="a" style="left:729px;top:747px" width="17" height="17" viewBox="0 0 17 17"><rect x=".5" y=".5" width="16" height="16" fill="#1830d8" stroke="#081890"/><path d="M4 4l9 9M13 4l-9 9M4 4h4M4 4v4M13 13H9M13 13V9" stroke="#fff" stroke-width="2" fill="none"/></svg>
<div class="a ui" style="left:747px;top:748px;font-size:11.5px;letter-spacing:-.25px;width:64px;overflow:hidden">Microsoft ...</div>
<div class="a" style="left:825px;top:745px;width:196px;height:21px;border:1px solid;border-color:#808080 #fff #fff #808080"></div>
<svg class="a" style="left:828px;top:747px" width="16" height="17" viewBox="0 0 16 17"><path d="M1 6h3l5-5v15l-5-5H1z" fill="#d8d830" stroke="#404000"/><path d="M11 4l3-2M11.500 8.500h3.500M11 13l3 2" stroke="#404040"/></svg>
<svg class="a" style="left:846px;top:747px" width="17" height="17" viewBox="0 0 17 17"><path d="M.5 8C2 3 6 1.500 8.500 1.500S15 3 16.500 8c-2-1.500-3.500-1.500-4 0-1-1.500-2.500-1.500-4 0-1.500-1.500-3-1.500-4 0-.5-1.500-2-1.500-4 0z" fill="#20b030" stroke="#005010"/><path d="M8.500 8v6.500a1.500 1.500 0 0 1-3 0" stroke="#005010" stroke-width="1.400" fill="none"/></svg>
<svg class="a" style="left:865px;top:747px" width="17" height="17" viewBox="0 0 17 17"><circle cx="7.500" cy="7.500" r="6.500" fill="#4080d0" stroke="#103070"/><path d="M4 4c2-1 4 0 4 2s-3 2-3 4 2 2 3 3M10 3c2 1 3 3 2 5" stroke="#60d060" stroke-width="1.500" fill="none"/><rect x="7" y="10" width="9" height="6" fill="#c0c0c0" stroke="#404040"/><rect x="8.500" y="11" width="6" height="3" fill="#2040a0"/></svg>
<svg class="a" style="left:883px;top:747px" width="17" height="17" viewBox="0 0 17 17"><path d="M1 16L8 3l3 2-5 11z" fill="#f0d020" stroke="#605000"/><circle cx="10" cy="6" r="4" fill="#a0d8f8" stroke="#2060a0" stroke-width="1.300"/><path d="M3 15h12" stroke="#d02020" stroke-width="2"/><path d="M12 9l4 5" stroke="#2060a0" stroke-width="2"/></svg>
<div class="a" style="left:900px;top:746px;width:18px;height:10px;background:#e02020"></div><div class="a ui" style="left:900px;top:745px;width:18px;text-align:center;font-size:8px;line-height:11px;color:#fff;font-weight:bold;letter-spacing:-1px">中文</div><div class="a ui" style="left:900px;top:754px;width:18px;text-align:center;font-size:12px;line-height:12px;color:#1020e0;font-weight:bold">cn</div>
<svg class="a" style="left:919px;top:746px" width="17" height="19" viewBox="0 0 17 19"><ellipse cx="8.500" cy="7" rx="5.500" ry="6" fill="#101010"/><ellipse cx="8.500" cy="13" rx="7" ry="5.500" fill="#101010"/><ellipse cx="8.500" cy="13.500" rx="4.500" ry="4" fill="#fff"/><ellipse cx="6.500" cy="5.500" rx="1.300" ry="1.800" fill="#fff"/><ellipse cx="10.500" cy="5.500" rx="1.300" ry="1.800" fill="#fff"/><ellipse cx="8.500" cy="9" rx="3" ry="1.200" fill="#f0a020"/><path d="M3 10.500c3 2 8 2 11 0v2c-3 2-8 2-11 0z" fill="#e02020"/><ellipse cx="4.500" cy="18" rx="3" ry="1" fill="#f0a020"/><ellipse cx="12.500" cy="18" rx="3" ry="1" fill="#f0a020"/></svg>
<svg class="a" style="left:937px;top:747px" width="17" height="17" viewBox="0 0 17 17"><path d="M1 12L6 3l9-1-5 10z" fill="#f0e060" stroke="#605000"/><path d="M1 12l1 3 9-1-1-2" fill="#c0b040" stroke="#605000"/><path d="M8 15L14 2l2 1-6 13z" fill="#808080" stroke="#202020" stroke-width=".7"/></svg>
<div class="a ui" style="left:955px;top:747px;width:17px;height:17px;background:#0a246a;color:#fff;font-size:11px;line-height:17px;text-align:center;letter-spacing:-.5px">CH</div>
<div class="a ui" style="left:984px;top:749px;font-size:11px">18:05</div>

</body></html>
